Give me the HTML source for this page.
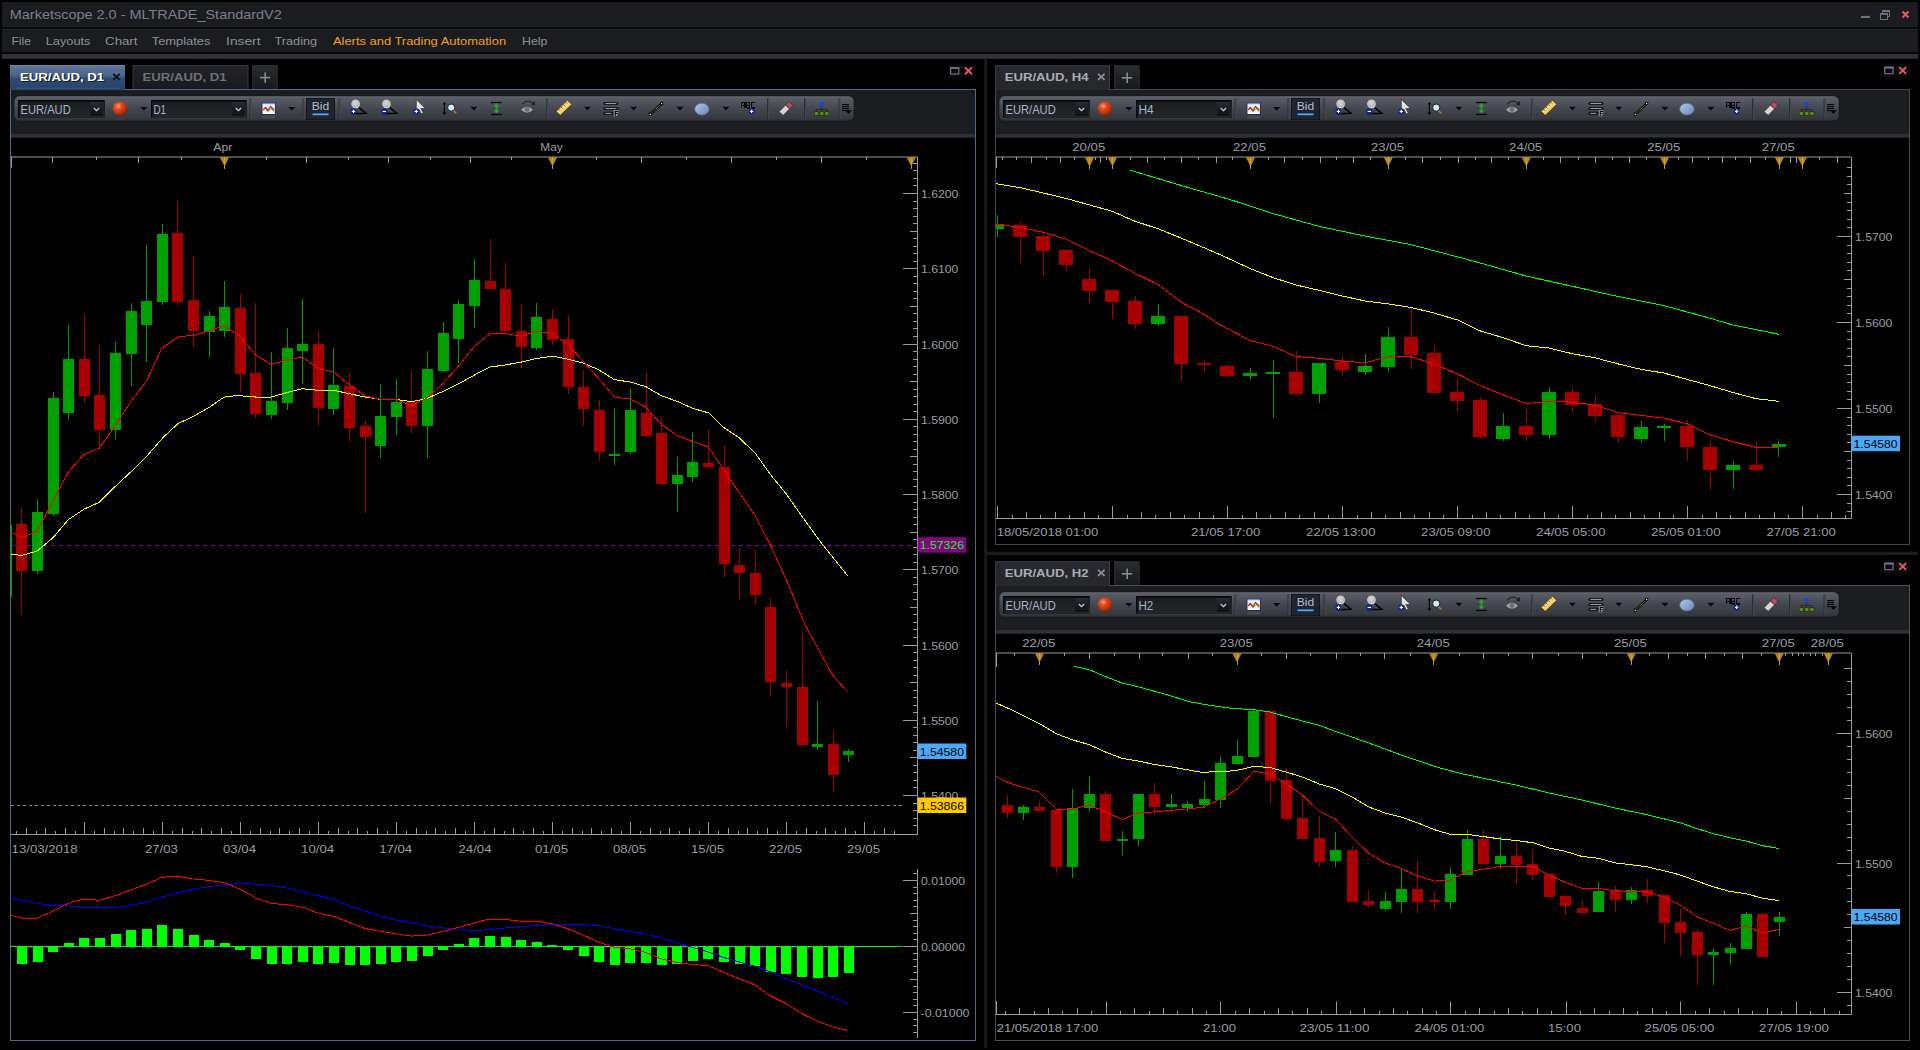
<!DOCTYPE html><html><head><meta charset="utf-8"><style>html,body{margin:0;padding:0;background:#000;width:1920px;height:1050px;overflow:hidden}svg{display:block}</style></head><body>
<svg width="1920" height="1050" viewBox="0 0 1920 1050" font-family='"Liberation Sans", sans-serif'>
<defs>
<linearGradient id="pill" x1="0" y1="0" x2="0" y2="1"><stop offset="0" stop-color="#5a5d66"/><stop offset="0.15" stop-color="#565962"/><stop offset="0.55" stop-color="#42454d"/><stop offset="0.92" stop-color="#35383f"/><stop offset="1" stop-color="#2a2c31"/></linearGradient>
<linearGradient id="tabA" x1="0" y1="0" x2="0" y2="1"><stop offset="0" stop-color="#62789a"/><stop offset="0.45" stop-color="#4a6488"/><stop offset="0.55" stop-color="#2e4c74"/><stop offset="1" stop-color="#27436a"/></linearGradient>
<linearGradient id="plus" x1="0" y1="0" x2="0" y2="1"><stop offset="0" stop-color="#2b2c31"/><stop offset="1" stop-color="#17181b"/></linearGradient>
<radialGradient id="ball" cx="0.38" cy="0.33" r="0.7"><stop offset="0" stop-color="#f8b0a0"/><stop offset="0.3" stop-color="#e8501c"/><stop offset="0.75" stop-color="#c03008"/><stop offset="1" stop-color="#802008"/></radialGradient>
<linearGradient id="ell" x1="0" y1="0" x2="1" y2="1"><stop offset="0" stop-color="#b0c8e8"/><stop offset="1" stop-color="#6a88b8"/></linearGradient>
<linearGradient id="combo" x1="0" y1="0" x2="0" y2="1"><stop offset="0" stop-color="#1b1c20"/><stop offset="1" stop-color="#26272c"/></linearGradient>
<linearGradient id="ddb" x1="0" y1="0" x2="0" y2="1"><stop offset="0" stop-color="#2a2b30"/><stop offset="1" stop-color="#0f1013"/></linearGradient>
<radialGradient id="mag" cx="0.45" cy="0.4" r="0.6"><stop offset="0" stop-color="#d8d8d8"/><stop offset="0.8" stop-color="#b8b8b8"/><stop offset="1" stop-color="#f0f0f8"/></radialGradient>
<linearGradient id="rul" x1="0" y1="0" x2="1" y2="1"><stop offset="0" stop-color="#fff4c0"/><stop offset="1" stop-color="#e8b028"/></linearGradient>
<linearGradient id="tabI" x1="0" y1="0" x2="0" y2="1"><stop offset="0" stop-color="#232429"/><stop offset="1" stop-color="#18191d"/></linearGradient>
<clipPath id="cL"><rect x="10.5" y="157" width="907" height="677"/></clipPath>
<clipPath id="cLm"><rect x="10.5" y="860" width="907" height="180"/></clipPath>
<clipPath id="cT"><rect x="996" y="157" width="855" height="361"/></clipPath>
<clipPath id="cB"><rect x="996" y="653" width="855" height="361"/></clipPath>
</defs>
<rect x="2.00" y="2.00" width="1916.00" height="25.60" fill="#1b1c20"/>
<rect x="2.00" y="27.60" width="1916.00" height="1.20" fill="#050507"/>
<rect x="2.00" y="28.80" width="1916.00" height="1.40" fill="#27282d"/>
<rect x="2.00" y="30.20" width="1916.00" height="22.40" fill="#1b1c20"/>
<rect x="2.00" y="52.60" width="1916.00" height="1.30" fill="#050507"/>
<rect x="2.00" y="53.90" width="1916.00" height="4.90" fill="#30323a"/>
<text x="9.80" y="19.30" font-size="13" fill="#7c7e8e" textLength="272.00" lengthAdjust="spacingAndGlyphs">Marketscope 2.0 - MLTRADE_StandardV2</text>
<text x="11.40" y="45.20" font-size="11" fill="#8c9098" textLength="19.70" lengthAdjust="spacingAndGlyphs">File</text>
<text x="45.75" y="45.20" font-size="11" fill="#8c9098" textLength="44.75" lengthAdjust="spacingAndGlyphs">Layouts</text>
<text x="105.10" y="45.20" font-size="11" fill="#8c9098" textLength="32.30" lengthAdjust="spacingAndGlyphs">Chart</text>
<text x="151.70" y="45.20" font-size="11" fill="#8c9098" textLength="58.80" lengthAdjust="spacingAndGlyphs">Templates</text>
<text x="226.10" y="45.20" font-size="11" fill="#8c9098" textLength="34.40" lengthAdjust="spacingAndGlyphs">Insert</text>
<text x="274.50" y="45.20" font-size="11" fill="#8c9098" textLength="42.60" lengthAdjust="spacingAndGlyphs">Trading</text>
<text x="332.90" y="45.20" font-size="11" fill="#f0a020" textLength="173.20" lengthAdjust="spacingAndGlyphs">Alerts and Trading Automation</text>
<text x="522.00" y="45.20" font-size="11" fill="#8c9098" textLength="25.40" lengthAdjust="spacingAndGlyphs">Help</text>
<rect x="1860.90" y="15.90" width="9.10" height="2.10" fill="#6e7080"/>
<g fill="none" stroke="#6e7080" stroke-width="1.1" shape-rendering="crispEdges"><path d="M1882.6 13 V10.5 H1889.5 V16.5 H1887.6"/><rect x="1880.5" y="13.5" width="7" height="6"/></g>
<rect x="1882.10" y="10.00" width="7.80" height="2.00" fill="#6e7080"/>
<rect x="1880.00" y="12.90" width="8.10" height="2.00" fill="#6e7080"/>
<path d="M1902.6 11.5 L1908.5 17.5 M1908.5 11.5 L1902.6 17.5" stroke="#e05a60" stroke-width="2"/>
<rect x="10" y="65" width="115" height="24.6" fill="url(#tabA)"/>
<rect x="10.00" y="65.00" width="115.00" height="1.00" fill="#7088a8"/>
<rect x="16.00" y="87.80" width="104.00" height="1.00" fill="#3a5880"/>
<text x="20.00" y="81.00" font-size="11" font-weight="bold" fill="#101010" textLength="84.00" lengthAdjust="spacingAndGlyphs" transform="translate(1,1)">EUR/AUD, D1</text>
<text x="20.00" y="81.00" font-size="11" font-weight="bold" fill="#ffffff" textLength="84.00" lengthAdjust="spacingAndGlyphs">EUR/AUD, D1</text>
<path d="M113.2 73.8 L119.8 79.8 M119.8 73.8 L113.2 79.8" stroke="#101010" stroke-width="1.8"/>
<rect x="133" y="65.5" width="115" height="24" fill="url(#tabI)" stroke="#34363c" stroke-width="1"/>
<text x="142.50" y="81.00" font-size="11" font-weight="bold" fill="#6c7078" textLength="84.00" lengthAdjust="spacingAndGlyphs">EUR/AUD, D1</text>
<rect x="252.7" y="65.5" width="24.5" height="24" fill="url(#plus)" stroke="#2c2d33" stroke-width="1"/>
<rect x="260.00" y="76.80" width="10.20" height="1.60" fill="#8a8c94"/>
<rect x="264.40" y="72.40" width="1.60" height="10.40" fill="#8a8c94"/>
<rect x="948.10" y="64.40" width="27.70" height="13.50" fill="#0b0b0d"/>
<rect x="950.6" y="67.6" width="8.2" height="6.4" fill="none" stroke="#6e7080" stroke-width="1.2"/>
<rect x="950.10" y="67.00" width="9.20" height="2.00" fill="#6e7080"/>
<path d="M965.1 67.4 L971.9 74.2 M971.9 67.4 L965.1 74.2" stroke="#e05a5a" stroke-width="2"/>
<rect x="10.5" y="89.5" width="965" height="951" fill="#000" stroke="#51688a" stroke-width="1"/>
<rect x="11.00" y="90.00" width="964.00" height="44.00" fill="#1c1d21"/>
<rect x="11.00" y="134.00" width="964.00" height="3.70" fill="#2e3038"/>
<rect x="11.00" y="89.00" width="114.00" height="1.20" fill="#27436a"/>
<rect x="13.4" y="95.3" width="841.3" height="26.5" rx="6" ry="6" fill="#18191d"/>
<rect x="14.4" y="96.3" width="839.3" height="24.5" rx="5" ry="5" fill="url(#pill)"/>
<rect x="19.00" y="96.60" width="830.00" height="1.00" fill="#62656e"/>
<rect x="18.00" y="100.00" width="86.80" height="17.70" fill="#08090b"/>
<rect x="19.50" y="101.80" width="85.30" height="15.90" fill="url(#combo)"/>
<rect x="90.0" y="102.0" width="12.8" height="13.8" fill="url(#ddb)"/>
<path d="M93.8 108.0 L96.5 110.7 L99.2 108.0" fill="none" stroke="#d0d4dc" stroke-width="1.1"/>
<text x="20.50" y="114.00" font-size="12" fill="#a6b4ca" textLength="50.20" lengthAdjust="spacingAndGlyphs">EUR/AUD</text>
<rect x="151.00" y="100.00" width="95.70" height="17.70" fill="#08090b"/>
<rect x="152.50" y="101.80" width="94.20" height="15.90" fill="url(#combo)"/>
<rect x="231.9" y="102.0" width="12.8" height="13.8" fill="url(#ddb)"/>
<path d="M235.7 108.0 L238.4 110.7 L241.1 108.0" fill="none" stroke="#d0d4dc" stroke-width="1.1"/>
<text x="153.50" y="114.00" font-size="12" fill="#a6b4ca" textLength="12.60" lengthAdjust="spacingAndGlyphs">D1</text>
<circle cx="119.9" cy="108.5" r="7.1" fill="url(#ball)"/>
<ellipse cx="119.9" cy="118.5" rx="5" ry="1.5" fill="#5a3a38" opacity="0.5"/>
<path d="M140.4 107.0 L147.4 107.0 L143.9 110.7 Z" fill="#0a0a0a"/>
<rect x="249.50" y="98.20" width="1.00" height="21.30" fill="#2a2c31"/>
<rect x="250.50" y="98.20" width="1.00" height="21.30" fill="#464950"/>
<rect x="261.70" y="102.00" width="14.00" height="12.70" fill="#1a2a60"/>
<rect x="262.50" y="103.80" width="12.40" height="10.20" fill="#f4f6fa"/>
<rect x="262.50" y="102.60" width="12.40" height="1.60" fill="#6a8ad0"/>
<polyline points="263.0,110.0 265.5,107.5 268.0,110.5 270.5,106.5 274.3,110.0" fill="none" stroke="#d82020" stroke-width="1.3"/>
<polyline points="265.5,108.5 268.0,111.5 271.0,108.5 274.3,111.5" fill="none" stroke="#209020" stroke-width="1"/>
<rect x="262.50" y="115.80" width="12.50" height="2.60" fill="#4a4d55"/>
<path d="M288.2 107.0 L295.2 107.0 L291.7 110.7 Z" fill="#0a0a0a"/>
<rect x="302.50" y="98.20" width="1.00" height="21.30" fill="#2a2c31"/>
<rect x="303.50" y="98.20" width="1.00" height="21.30" fill="#464950"/>
<rect x="306.00" y="98.00" width="29.00" height="22.00" fill="#15171b"/>
<rect x="307.00" y="99.00" width="27.00" height="20.00" fill="#1e2530"/>
<text x="311.75" y="110.30" font-size="10.5" fill="#b4bcc8" textLength="17.50" lengthAdjust="spacingAndGlyphs" font-weight="normal">Bid</text>
<rect x="312.50" y="113.40" width="16.00" height="1.80" fill="#4aa8f0"/>
<rect x="338.50" y="98.20" width="1.00" height="21.30" fill="#2a2c31"/>
<rect x="339.50" y="98.20" width="1.00" height="21.30" fill="#464950"/>
<path d="M359.0 107.6 L365.8 113.2 L351.4 113.6" fill="none" stroke="#050505" stroke-width="1.6"/>
<circle cx="355.6" cy="103.8" r="4.4" fill="url(#mag)"/>
<circle cx="353.5" cy="111.4" r="3.1" fill="#0c2a88"/>
<rect x="351.80" y="110.90" width="3.40" height="1.10" fill="#ffffff"/>
<rect x="352.95" y="109.70" width="1.10" height="3.40" fill="#ffffff"/>
<path d="M389.8 107.6 L396.6 113.2 L382.2 113.6" fill="none" stroke="#050505" stroke-width="1.6"/>
<circle cx="386.4" cy="103.8" r="4.4" fill="url(#mag)"/>
<circle cx="384.3" cy="111.4" r="3.1" fill="#0c2a88"/>
<rect x="382.60" y="110.90" width="3.40" height="1.10" fill="#ffffff"/>
<path d="M416.3 99.4 L416.3 111.0 L418.8 109.3 L421.5 114.0 L423.3 113.0 L420.8 108.5 L425.4 108.5 Z" fill="#e4e4e4" stroke="#303030" stroke-width="0.7"/>
<circle cx="416.3" cy="111.4" r="3.1" fill="#0c2a88"/>
<rect x="414.60" y="110.90" width="3.40" height="1.10" fill="#ffffff"/>
<rect x="415.75" y="109.70" width="1.10" height="3.40" fill="#ffffff"/>
<path d="M444.4 102.5 V114.5" stroke="#080808" stroke-width="1.2"/>
<path d="M442.4 104.6 L444.4 102.0 L446.4 104.6 Z M442.4 112.4 L444.4 115.0 L446.4 112.4 Z" fill="#080808"/>
<path d="M453.3 110.4 L456.2 113.4" stroke="#d07010" stroke-width="1.6"/>
<circle cx="451.2" cy="107.6" r="3.6" fill="#c8ecfa" stroke="#101010" stroke-width="0.9"/>
<path d="M470.4 106.8 L477.4 106.8 L473.9 110.5 Z" fill="#0a0a0a"/>
<rect x="491.00" y="101.90" width="10.80" height="1.30" fill="#080808"/>
<rect x="491.00" y="113.80" width="10.80" height="1.30" fill="#080808"/>
<path d="M496.4 103.0 L493.6 106.4 L499.2 106.4 Z M496.4 113.6 L493.6 110.2 L499.2 110.2 Z" fill="#28a828"/>
<rect x="495.60" y="105.50" width="1.70" height="5.50" fill="#28a828"/>
<path d="M520.6 109.8 Q527.0 103.2 533.4 109.8 Q527.0 116.2 520.6 109.8 Z" fill="#a4a6aa" stroke="#3a3c40" stroke-width="0.6"/>
<circle cx="527.0" cy="109.6" r="2.4" fill="#6e7074"/>
<path d="M522.2 104.2 Q527.5 98.5 532.6 103.0" fill="none" stroke="#1e2024" stroke-width="1.1"/>
<path d="M531.0 104.5 L535.0 101.0 L535.0 105.5 Z" fill="#1e2024"/>
<rect x="546.30" y="98.20" width="1.00" height="21.30" fill="#2a2c31"/>
<rect x="547.30" y="98.20" width="1.00" height="21.30" fill="#464950"/>
<path d="M556.1 111.4 L567.3 100.2 L571.8 104.3 L560.3 115.3 Z" fill="url(#rul)" stroke="#5a4000" stroke-width="0.8"/>
<path d="M558.6 109.2 l1.3 1.3" stroke="#303010" stroke-width="0.8"/>
<path d="M561.0 106.9 l1.3 1.3" stroke="#303010" stroke-width="0.8"/>
<path d="M563.4 104.5 l1.3 1.3" stroke="#303010" stroke-width="0.8"/>
<path d="M565.8 102.2 l1.3 1.3" stroke="#303010" stroke-width="0.8"/>
<path d="M583.9 106.7 L590.9 106.7 L587.4 110.4 Z" fill="#0a0a0a"/>
<rect x="603.3" y="101.9" width="15.3" height="3.2" rx="1.5" fill="#1a1b1e"/>
<rect x="605.50" y="103.00" width="10.90" height="1.00" fill="#9a9ca2"/>
<rect x="603.3" y="106.9" width="15.3" height="3.2" rx="1.5" fill="#1a1b1e"/>
<rect x="605.50" y="108.00" width="10.90" height="1.00" fill="#9a9ca2"/>
<rect x="603.3" y="111.8" width="10.1" height="3.2" rx="1.5" fill="#1a1b1e"/>
<rect x="605.50" y="112.90" width="5.70" height="1.00" fill="#9a9ca2"/>
<path d="M615.2 116.3 V111.5 H618.3 M615.2 113.6 H617.5" fill="none" stroke="#d8d8d8" stroke-width="2.6"/>
<path d="M615.2 116.3 V111.5 H618.3 M615.2 113.6 H617.5" fill="none" stroke="#080808" stroke-width="1.3"/>
<path d="M630.2 106.8 L637.2 106.8 L633.7 110.5 Z" fill="#0a0a0a"/>
<path d="M650.3 114.4 L661.6 103.5" stroke="#080808" stroke-width="2.6"/>
<path d="M650.3 114.4 L661.6 103.5" stroke="#7ac020" stroke-width="1" stroke-dasharray="1,0.6"/>
<rect x="648.70" y="112.80" width="3.20" height="3.20" fill="#080808"/>
<rect x="649.70" y="113.80" width="1.20" height="1.20" fill="#e0e0e0"/>
<rect x="660.00" y="101.90" width="3.20" height="3.20" fill="#080808"/>
<rect x="661.00" y="102.90" width="1.20" height="1.20" fill="#e0e0e0"/>
<path d="M676.5 106.8 L683.5 106.8 L680.0 110.5 Z" fill="#0a0a0a"/>
<ellipse cx="701.9" cy="109.1" rx="7.2" ry="5.9" fill="url(#ell)" stroke="#56729e" stroke-width="0.8"/>
<path d="M722.4 106.8 L729.4 106.8 L725.9 110.5 Z" fill="#0a0a0a"/>
<g fill="none" stroke="#080808" stroke-width="1.3" shape-rendering="crispEdges"><path d="M741.6 108.0 V102.5 H745.0 V108.0 M741.6 105.2 H745.0"/><path d="M746.6 108.0 V102.5 H749.5 V108.0 H746.6 M746.6 105.2 H749.5"/><path d="M755.2 102.5 H751.4 V108.0 H755.2"/></g>
<circle cx="751.6" cy="111.3" r="3.1" fill="#0c2a88"/>
<rect x="749.90" y="110.80" width="3.40" height="1.10" fill="#ffffff"/>
<rect x="751.05" y="109.60" width="1.10" height="3.40" fill="#ffffff"/>
<rect x="767.10" y="98.20" width="1.00" height="21.30" fill="#2a2c31"/>
<rect x="768.10" y="98.20" width="1.00" height="21.30" fill="#464950"/>
<path d="M779.0 111.7 L785.6 105.0 L789.6 108.8 L783.2 115.3 Z" fill="#d4d4d4" stroke="#303030" stroke-width="0.7"/>
<path d="M785.6 105.0 L788.8 101.6 L793.3 105.6 L789.6 108.8 Z" fill="#c04858" stroke="#402020" stroke-width="0.7"/>
<rect x="804.10" y="98.20" width="1.00" height="21.30" fill="#2a2c31"/>
<rect x="805.10" y="98.20" width="1.00" height="21.30" fill="#464950"/>
<path d="M821.4 106.5 V111.5 M816.5 112.0 V109.5 H826.9 V112.0" stroke="#243410" stroke-width="1.1" fill="none"/>
<rect x="819.10" y="102.00" width="4.70" height="4.80" fill="#1848d8"/>
<rect x="814.20" y="111.40" width="4.50" height="4.30" fill="#243410"/>
<rect x="814.80" y="112.00" width="3.30" height="3.10" fill="#5a8a18"/>
<rect x="819.60" y="111.40" width="4.50" height="4.30" fill="#243410"/>
<rect x="820.20" y="112.00" width="3.30" height="3.10" fill="#5a8a18"/>
<rect x="824.60" y="111.40" width="4.50" height="4.30" fill="#243410"/>
<rect x="825.20" y="112.00" width="3.30" height="3.10" fill="#5a8a18"/>
<rect x="838.60" y="98.20" width="1.00" height="21.30" fill="#2a2c31"/>
<rect x="839.60" y="98.20" width="1.00" height="21.30" fill="#464950"/>
<rect x="842.00" y="104.00" width="7.00" height="1.10" fill="#080808"/>
<rect x="842.00" y="106.00" width="7.00" height="1.10" fill="#080808"/>
<rect x="842.00" y="108.00" width="7.00" height="1.10" fill="#080808"/>
<rect x="842.00" y="110.00" width="7.00" height="1.10" fill="#080808"/>
<path d="M845.0 110.2 L852.0 110.2 L848.5 113.9 Z" fill="#0a0a0a"/>
<rect x="11.00" y="156.50" width="906.50" height="1.00" fill="#9a9a9a"/>
<rect x="11.00" y="156.50" width="1.00" height="11.00" fill="#9a9a9a"/>
<rect x="52.00" y="157.00" width="1.00" height="6.00" fill="#9a9a9a"/>
<rect x="96.00" y="157.00" width="1.00" height="3.00" fill="#9a9a9a"/>
<rect x="138.00" y="157.00" width="1.00" height="6.00" fill="#9a9a9a"/>
<rect x="181.00" y="157.00" width="1.00" height="3.00" fill="#9a9a9a"/>
<rect x="266.00" y="157.00" width="1.00" height="3.00" fill="#9a9a9a"/>
<rect x="306.00" y="157.00" width="1.00" height="6.00" fill="#9a9a9a"/>
<rect x="348.00" y="157.00" width="1.00" height="3.00" fill="#9a9a9a"/>
<rect x="388.00" y="157.00" width="1.00" height="6.00" fill="#9a9a9a"/>
<rect x="430.00" y="157.00" width="1.00" height="3.00" fill="#9a9a9a"/>
<rect x="470.00" y="157.00" width="1.00" height="6.00" fill="#9a9a9a"/>
<rect x="511.00" y="157.00" width="1.00" height="3.00" fill="#9a9a9a"/>
<rect x="596.00" y="157.00" width="1.00" height="3.00" fill="#9a9a9a"/>
<rect x="641.00" y="157.00" width="1.00" height="6.00" fill="#9a9a9a"/>
<rect x="686.00" y="157.00" width="1.00" height="3.00" fill="#9a9a9a"/>
<rect x="731.00" y="157.00" width="1.00" height="6.00" fill="#9a9a9a"/>
<rect x="776.00" y="157.00" width="1.00" height="3.00" fill="#9a9a9a"/>
<rect x="821.00" y="157.00" width="1.00" height="6.00" fill="#9a9a9a"/>
<rect x="866.00" y="157.00" width="1.00" height="3.00" fill="#9a9a9a"/>
<text x="213.26" y="151.00" font-size="11" fill="#9a9ea6" textLength="19.07" lengthAdjust="spacingAndGlyphs">Apr</text>
<text x="540.30" y="151.00" font-size="11" fill="#9a9ea6" textLength="22.40" lengthAdjust="spacingAndGlyphs">May</text>
<rect x="11.00" y="834.00" width="907.00" height="1.00" fill="#9a9a9a"/>
<rect x="16.00" y="831.00" width="1.00" height="3.00" fill="#9a9a9a"/>
<rect x="26.00" y="828.00" width="1.00" height="6.00" fill="#9a9a9a"/>
<rect x="36.00" y="831.00" width="1.00" height="3.00" fill="#9a9a9a"/>
<rect x="45.00" y="828.00" width="1.00" height="6.00" fill="#9a9a9a"/>
<rect x="55.00" y="831.00" width="1.00" height="3.00" fill="#9a9a9a"/>
<rect x="65.00" y="828.00" width="1.00" height="6.00" fill="#9a9a9a"/>
<rect x="75.00" y="831.00" width="1.00" height="3.00" fill="#9a9a9a"/>
<rect x="84.00" y="822.00" width="1.00" height="12.00" fill="#9a9a9a"/>
<rect x="94.00" y="831.00" width="1.00" height="3.00" fill="#9a9a9a"/>
<rect x="104.00" y="828.00" width="1.00" height="6.00" fill="#9a9a9a"/>
<rect x="114.00" y="831.00" width="1.00" height="3.00" fill="#9a9a9a"/>
<rect x="123.00" y="828.00" width="1.00" height="6.00" fill="#9a9a9a"/>
<rect x="133.00" y="831.00" width="1.00" height="3.00" fill="#9a9a9a"/>
<rect x="143.00" y="828.00" width="1.00" height="6.00" fill="#9a9a9a"/>
<rect x="153.00" y="831.00" width="1.00" height="3.00" fill="#9a9a9a"/>
<rect x="162.00" y="822.00" width="1.00" height="12.00" fill="#9a9a9a"/>
<rect x="172.00" y="831.00" width="1.00" height="3.00" fill="#9a9a9a"/>
<rect x="182.00" y="828.00" width="1.00" height="6.00" fill="#9a9a9a"/>
<rect x="192.00" y="831.00" width="1.00" height="3.00" fill="#9a9a9a"/>
<rect x="201.00" y="828.00" width="1.00" height="6.00" fill="#9a9a9a"/>
<rect x="211.00" y="831.00" width="1.00" height="3.00" fill="#9a9a9a"/>
<rect x="221.00" y="828.00" width="1.00" height="6.00" fill="#9a9a9a"/>
<rect x="231.00" y="831.00" width="1.00" height="3.00" fill="#9a9a9a"/>
<rect x="240.00" y="822.00" width="1.00" height="12.00" fill="#9a9a9a"/>
<rect x="250.00" y="831.00" width="1.00" height="3.00" fill="#9a9a9a"/>
<rect x="260.00" y="828.00" width="1.00" height="6.00" fill="#9a9a9a"/>
<rect x="270.00" y="831.00" width="1.00" height="3.00" fill="#9a9a9a"/>
<rect x="279.00" y="828.00" width="1.00" height="6.00" fill="#9a9a9a"/>
<rect x="289.00" y="831.00" width="1.00" height="3.00" fill="#9a9a9a"/>
<rect x="299.00" y="828.00" width="1.00" height="6.00" fill="#9a9a9a"/>
<rect x="309.00" y="831.00" width="1.00" height="3.00" fill="#9a9a9a"/>
<rect x="318.00" y="822.00" width="1.00" height="12.00" fill="#9a9a9a"/>
<rect x="328.00" y="831.00" width="1.00" height="3.00" fill="#9a9a9a"/>
<rect x="338.00" y="828.00" width="1.00" height="6.00" fill="#9a9a9a"/>
<rect x="348.00" y="831.00" width="1.00" height="3.00" fill="#9a9a9a"/>
<rect x="357.00" y="828.00" width="1.00" height="6.00" fill="#9a9a9a"/>
<rect x="367.00" y="831.00" width="1.00" height="3.00" fill="#9a9a9a"/>
<rect x="377.00" y="828.00" width="1.00" height="6.00" fill="#9a9a9a"/>
<rect x="387.00" y="831.00" width="1.00" height="3.00" fill="#9a9a9a"/>
<rect x="396.00" y="822.00" width="1.00" height="12.00" fill="#9a9a9a"/>
<rect x="406.00" y="831.00" width="1.00" height="3.00" fill="#9a9a9a"/>
<rect x="416.00" y="828.00" width="1.00" height="6.00" fill="#9a9a9a"/>
<rect x="426.00" y="831.00" width="1.00" height="3.00" fill="#9a9a9a"/>
<rect x="435.00" y="828.00" width="1.00" height="6.00" fill="#9a9a9a"/>
<rect x="445.00" y="831.00" width="1.00" height="3.00" fill="#9a9a9a"/>
<rect x="455.00" y="828.00" width="1.00" height="6.00" fill="#9a9a9a"/>
<rect x="465.00" y="831.00" width="1.00" height="3.00" fill="#9a9a9a"/>
<rect x="474.00" y="822.00" width="1.00" height="12.00" fill="#9a9a9a"/>
<rect x="484.00" y="831.00" width="1.00" height="3.00" fill="#9a9a9a"/>
<rect x="494.00" y="828.00" width="1.00" height="6.00" fill="#9a9a9a"/>
<rect x="504.00" y="831.00" width="1.00" height="3.00" fill="#9a9a9a"/>
<rect x="513.00" y="828.00" width="1.00" height="6.00" fill="#9a9a9a"/>
<rect x="523.00" y="831.00" width="1.00" height="3.00" fill="#9a9a9a"/>
<rect x="533.00" y="828.00" width="1.00" height="6.00" fill="#9a9a9a"/>
<rect x="543.00" y="831.00" width="1.00" height="3.00" fill="#9a9a9a"/>
<rect x="552.00" y="822.00" width="1.00" height="12.00" fill="#9a9a9a"/>
<rect x="562.00" y="831.00" width="1.00" height="3.00" fill="#9a9a9a"/>
<rect x="572.00" y="828.00" width="1.00" height="6.00" fill="#9a9a9a"/>
<rect x="582.00" y="831.00" width="1.00" height="3.00" fill="#9a9a9a"/>
<rect x="591.00" y="828.00" width="1.00" height="6.00" fill="#9a9a9a"/>
<rect x="601.00" y="831.00" width="1.00" height="3.00" fill="#9a9a9a"/>
<rect x="611.00" y="828.00" width="1.00" height="6.00" fill="#9a9a9a"/>
<rect x="621.00" y="831.00" width="1.00" height="3.00" fill="#9a9a9a"/>
<rect x="630.00" y="822.00" width="1.00" height="12.00" fill="#9a9a9a"/>
<rect x="640.00" y="831.00" width="1.00" height="3.00" fill="#9a9a9a"/>
<rect x="650.00" y="828.00" width="1.00" height="6.00" fill="#9a9a9a"/>
<rect x="660.00" y="831.00" width="1.00" height="3.00" fill="#9a9a9a"/>
<rect x="669.00" y="828.00" width="1.00" height="6.00" fill="#9a9a9a"/>
<rect x="679.00" y="831.00" width="1.00" height="3.00" fill="#9a9a9a"/>
<rect x="689.00" y="828.00" width="1.00" height="6.00" fill="#9a9a9a"/>
<rect x="699.00" y="831.00" width="1.00" height="3.00" fill="#9a9a9a"/>
<rect x="708.00" y="822.00" width="1.00" height="12.00" fill="#9a9a9a"/>
<rect x="718.00" y="831.00" width="1.00" height="3.00" fill="#9a9a9a"/>
<rect x="728.00" y="828.00" width="1.00" height="6.00" fill="#9a9a9a"/>
<rect x="738.00" y="831.00" width="1.00" height="3.00" fill="#9a9a9a"/>
<rect x="747.00" y="828.00" width="1.00" height="6.00" fill="#9a9a9a"/>
<rect x="757.00" y="831.00" width="1.00" height="3.00" fill="#9a9a9a"/>
<rect x="767.00" y="828.00" width="1.00" height="6.00" fill="#9a9a9a"/>
<rect x="777.00" y="831.00" width="1.00" height="3.00" fill="#9a9a9a"/>
<rect x="786.00" y="822.00" width="1.00" height="12.00" fill="#9a9a9a"/>
<rect x="796.00" y="831.00" width="1.00" height="3.00" fill="#9a9a9a"/>
<rect x="806.00" y="828.00" width="1.00" height="6.00" fill="#9a9a9a"/>
<rect x="816.00" y="831.00" width="1.00" height="3.00" fill="#9a9a9a"/>
<rect x="825.00" y="828.00" width="1.00" height="6.00" fill="#9a9a9a"/>
<rect x="835.00" y="831.00" width="1.00" height="3.00" fill="#9a9a9a"/>
<rect x="845.00" y="828.00" width="1.00" height="6.00" fill="#9a9a9a"/>
<rect x="855.00" y="831.00" width="1.00" height="3.00" fill="#9a9a9a"/>
<rect x="864.00" y="822.00" width="1.00" height="12.00" fill="#9a9a9a"/>
<rect x="874.00" y="831.00" width="1.00" height="3.00" fill="#9a9a9a"/>
<rect x="884.00" y="828.00" width="1.00" height="6.00" fill="#9a9a9a"/>
<rect x="894.00" y="831.00" width="1.00" height="3.00" fill="#9a9a9a"/>
<text x="11.60" y="852.50" font-size="11" fill="#9a9ea6" textLength="65.96" lengthAdjust="spacingAndGlyphs">13/03/2018</text>
<text x="144.91" y="852.50" font-size="11" fill="#9a9ea6" textLength="32.98" lengthAdjust="spacingAndGlyphs">27/03</text>
<text x="223.01" y="852.50" font-size="11" fill="#9a9ea6" textLength="32.98" lengthAdjust="spacingAndGlyphs">03/04</text>
<text x="301.11" y="852.50" font-size="11" fill="#9a9ea6" textLength="32.98" lengthAdjust="spacingAndGlyphs">10/04</text>
<text x="379.21" y="852.50" font-size="11" fill="#9a9ea6" textLength="32.98" lengthAdjust="spacingAndGlyphs">17/04</text>
<text x="458.51" y="852.50" font-size="11" fill="#9a9ea6" textLength="32.98" lengthAdjust="spacingAndGlyphs">24/04</text>
<text x="535.01" y="852.50" font-size="11" fill="#9a9ea6" textLength="32.98" lengthAdjust="spacingAndGlyphs">01/05</text>
<text x="613.01" y="852.50" font-size="11" fill="#9a9ea6" textLength="32.98" lengthAdjust="spacingAndGlyphs">08/05</text>
<text x="691.01" y="852.50" font-size="11" fill="#9a9ea6" textLength="32.98" lengthAdjust="spacingAndGlyphs">15/05</text>
<text x="769.01" y="852.50" font-size="11" fill="#9a9ea6" textLength="32.98" lengthAdjust="spacingAndGlyphs">22/05</text>
<text x="847.01" y="852.50" font-size="11" fill="#9a9ea6" textLength="32.98" lengthAdjust="spacingAndGlyphs">29/05</text>
<g shape-rendering="crispEdges">
<rect x="917.00" y="157.00" width="1.00" height="677.00" fill="#9a9a9a"/>
<rect x="913.00" y="825.00" width="4.00" height="1.00" fill="#9a9a9a"/>
<rect x="913.00" y="818.00" width="4.00" height="1.00" fill="#9a9a9a"/>
<rect x="913.00" y="810.00" width="4.00" height="1.00" fill="#9a9a9a"/>
<rect x="913.00" y="803.00" width="4.00" height="1.00" fill="#9a9a9a"/>
<rect x="903.00" y="795.00" width="14.00" height="1.00" fill="#9a9a9a"/>
<rect x="913.00" y="787.00" width="4.00" height="1.00" fill="#9a9a9a"/>
<rect x="913.00" y="780.00" width="4.00" height="1.00" fill="#9a9a9a"/>
<rect x="913.00" y="772.00" width="4.00" height="1.00" fill="#9a9a9a"/>
<rect x="913.00" y="765.00" width="4.00" height="1.00" fill="#9a9a9a"/>
<rect x="910.00" y="757.00" width="7.00" height="1.00" fill="#9a9a9a"/>
<rect x="913.00" y="750.00" width="4.00" height="1.00" fill="#9a9a9a"/>
<rect x="913.00" y="742.00" width="4.00" height="1.00" fill="#9a9a9a"/>
<rect x="913.00" y="735.00" width="4.00" height="1.00" fill="#9a9a9a"/>
<rect x="913.00" y="727.00" width="4.00" height="1.00" fill="#9a9a9a"/>
<rect x="903.00" y="720.00" width="14.00" height="1.00" fill="#9a9a9a"/>
<rect x="913.00" y="712.00" width="4.00" height="1.00" fill="#9a9a9a"/>
<rect x="913.00" y="705.00" width="4.00" height="1.00" fill="#9a9a9a"/>
<rect x="913.00" y="697.00" width="4.00" height="1.00" fill="#9a9a9a"/>
<rect x="913.00" y="690.00" width="4.00" height="1.00" fill="#9a9a9a"/>
<rect x="910.00" y="682.00" width="7.00" height="1.00" fill="#9a9a9a"/>
<rect x="913.00" y="675.00" width="4.00" height="1.00" fill="#9a9a9a"/>
<rect x="913.00" y="667.00" width="4.00" height="1.00" fill="#9a9a9a"/>
<rect x="913.00" y="660.00" width="4.00" height="1.00" fill="#9a9a9a"/>
<rect x="913.00" y="652.00" width="4.00" height="1.00" fill="#9a9a9a"/>
<rect x="903.00" y="645.00" width="14.00" height="1.00" fill="#9a9a9a"/>
<rect x="913.00" y="637.00" width="4.00" height="1.00" fill="#9a9a9a"/>
<rect x="913.00" y="629.00" width="4.00" height="1.00" fill="#9a9a9a"/>
<rect x="913.00" y="622.00" width="4.00" height="1.00" fill="#9a9a9a"/>
<rect x="913.00" y="614.00" width="4.00" height="1.00" fill="#9a9a9a"/>
<rect x="910.00" y="607.00" width="7.00" height="1.00" fill="#9a9a9a"/>
<rect x="913.00" y="599.00" width="4.00" height="1.00" fill="#9a9a9a"/>
<rect x="913.00" y="592.00" width="4.00" height="1.00" fill="#9a9a9a"/>
<rect x="913.00" y="584.00" width="4.00" height="1.00" fill="#9a9a9a"/>
<rect x="913.00" y="577.00" width="4.00" height="1.00" fill="#9a9a9a"/>
<rect x="903.00" y="569.00" width="14.00" height="1.00" fill="#9a9a9a"/>
<rect x="913.00" y="562.00" width="4.00" height="1.00" fill="#9a9a9a"/>
<rect x="913.00" y="554.00" width="4.00" height="1.00" fill="#9a9a9a"/>
<rect x="913.00" y="547.00" width="4.00" height="1.00" fill="#9a9a9a"/>
<rect x="913.00" y="539.00" width="4.00" height="1.00" fill="#9a9a9a"/>
<rect x="910.00" y="532.00" width="7.00" height="1.00" fill="#9a9a9a"/>
<rect x="913.00" y="524.00" width="4.00" height="1.00" fill="#9a9a9a"/>
<rect x="913.00" y="517.00" width="4.00" height="1.00" fill="#9a9a9a"/>
<rect x="913.00" y="509.00" width="4.00" height="1.00" fill="#9a9a9a"/>
<rect x="913.00" y="502.00" width="4.00" height="1.00" fill="#9a9a9a"/>
<rect x="903.00" y="494.00" width="14.00" height="1.00" fill="#9a9a9a"/>
<rect x="913.00" y="486.00" width="4.00" height="1.00" fill="#9a9a9a"/>
<rect x="913.00" y="479.00" width="4.00" height="1.00" fill="#9a9a9a"/>
<rect x="913.00" y="471.00" width="4.00" height="1.00" fill="#9a9a9a"/>
<rect x="913.00" y="464.00" width="4.00" height="1.00" fill="#9a9a9a"/>
<rect x="910.00" y="456.00" width="7.00" height="1.00" fill="#9a9a9a"/>
<rect x="913.00" y="449.00" width="4.00" height="1.00" fill="#9a9a9a"/>
<rect x="913.00" y="441.00" width="4.00" height="1.00" fill="#9a9a9a"/>
<rect x="913.00" y="434.00" width="4.00" height="1.00" fill="#9a9a9a"/>
<rect x="913.00" y="426.00" width="4.00" height="1.00" fill="#9a9a9a"/>
<rect x="903.00" y="419.00" width="14.00" height="1.00" fill="#9a9a9a"/>
<rect x="913.00" y="411.00" width="4.00" height="1.00" fill="#9a9a9a"/>
<rect x="913.00" y="404.00" width="4.00" height="1.00" fill="#9a9a9a"/>
<rect x="913.00" y="396.00" width="4.00" height="1.00" fill="#9a9a9a"/>
<rect x="913.00" y="389.00" width="4.00" height="1.00" fill="#9a9a9a"/>
<rect x="910.00" y="381.00" width="7.00" height="1.00" fill="#9a9a9a"/>
<rect x="913.00" y="374.00" width="4.00" height="1.00" fill="#9a9a9a"/>
<rect x="913.00" y="366.00" width="4.00" height="1.00" fill="#9a9a9a"/>
<rect x="913.00" y="359.00" width="4.00" height="1.00" fill="#9a9a9a"/>
<rect x="913.00" y="351.00" width="4.00" height="1.00" fill="#9a9a9a"/>
<rect x="903.00" y="344.00" width="14.00" height="1.00" fill="#9a9a9a"/>
<rect x="913.00" y="336.00" width="4.00" height="1.00" fill="#9a9a9a"/>
<rect x="913.00" y="328.00" width="4.00" height="1.00" fill="#9a9a9a"/>
<rect x="913.00" y="321.00" width="4.00" height="1.00" fill="#9a9a9a"/>
<rect x="913.00" y="313.00" width="4.00" height="1.00" fill="#9a9a9a"/>
<rect x="910.00" y="306.00" width="7.00" height="1.00" fill="#9a9a9a"/>
<rect x="913.00" y="298.00" width="4.00" height="1.00" fill="#9a9a9a"/>
<rect x="913.00" y="291.00" width="4.00" height="1.00" fill="#9a9a9a"/>
<rect x="913.00" y="283.00" width="4.00" height="1.00" fill="#9a9a9a"/>
<rect x="913.00" y="276.00" width="4.00" height="1.00" fill="#9a9a9a"/>
<rect x="903.00" y="268.00" width="14.00" height="1.00" fill="#9a9a9a"/>
<rect x="913.00" y="261.00" width="4.00" height="1.00" fill="#9a9a9a"/>
<rect x="913.00" y="253.00" width="4.00" height="1.00" fill="#9a9a9a"/>
<rect x="913.00" y="246.00" width="4.00" height="1.00" fill="#9a9a9a"/>
<rect x="913.00" y="238.00" width="4.00" height="1.00" fill="#9a9a9a"/>
<rect x="910.00" y="231.00" width="7.00" height="1.00" fill="#9a9a9a"/>
<rect x="913.00" y="223.00" width="4.00" height="1.00" fill="#9a9a9a"/>
<rect x="913.00" y="216.00" width="4.00" height="1.00" fill="#9a9a9a"/>
<rect x="913.00" y="208.00" width="4.00" height="1.00" fill="#9a9a9a"/>
<rect x="913.00" y="201.00" width="4.00" height="1.00" fill="#9a9a9a"/>
<rect x="903.00" y="193.00" width="14.00" height="1.00" fill="#9a9a9a"/>
<rect x="913.00" y="185.00" width="4.00" height="1.00" fill="#9a9a9a"/>
<rect x="913.00" y="178.00" width="4.00" height="1.00" fill="#9a9a9a"/>
<rect x="913.00" y="170.00" width="4.00" height="1.00" fill="#9a9a9a"/>
<rect x="913.00" y="163.00" width="4.00" height="1.00" fill="#9a9a9a"/>
</g>
<text x="921.00" y="198.00" font-size="11" fill="#9a9ea6" textLength="37.42" lengthAdjust="spacingAndGlyphs">1.6200</text>
<text x="921.00" y="273.00" font-size="11" fill="#9a9ea6" textLength="37.42" lengthAdjust="spacingAndGlyphs">1.6100</text>
<text x="921.00" y="349.00" font-size="11" fill="#9a9ea6" textLength="37.42" lengthAdjust="spacingAndGlyphs">1.6000</text>
<text x="921.00" y="424.00" font-size="11" fill="#9a9ea6" textLength="37.42" lengthAdjust="spacingAndGlyphs">1.5900</text>
<text x="921.00" y="499.00" font-size="11" fill="#9a9ea6" textLength="37.42" lengthAdjust="spacingAndGlyphs">1.5800</text>
<text x="921.00" y="574.00" font-size="11" fill="#9a9ea6" textLength="37.42" lengthAdjust="spacingAndGlyphs">1.5700</text>
<text x="921.00" y="650.00" font-size="11" fill="#9a9ea6" textLength="37.42" lengthAdjust="spacingAndGlyphs">1.5600</text>
<text x="921.00" y="725.00" font-size="11" fill="#9a9ea6" textLength="37.42" lengthAdjust="spacingAndGlyphs">1.5500</text>
<text x="921.00" y="800.00" font-size="11" fill="#9a9ea6" textLength="37.42" lengthAdjust="spacingAndGlyphs">1.5400</text>
<line x1="11" y1="545.5" x2="911" y2="545.5" stroke="#9000a8" stroke-width="1" stroke-dasharray="4,4" shape-rendering="crispEdges"/>
<line x1="11" y1="805.5" x2="903" y2="805.5" stroke="#8a8a8a" stroke-width="1" stroke-dasharray="3,3" shape-rendering="crispEdges"/>
<g clip-path="url(#cL)">
<rect x="11.00" y="525.00" width="1.00" height="72.00" fill="#00a000"/>
<rect x="10.50" y="527.00" width="1.20" height="40.00" fill="#00a000"/>
</g>
<g clip-path="url(#cL)" shape-rendering="crispEdges">
<rect x="21.00" y="508.00" width="1.00" height="107.00" fill="#a80000"/>
<rect x="16.00" y="524.00" width="11.00" height="47.00" fill="#a80000"/>
<rect x="37.00" y="499.00" width="1.00" height="75.00" fill="#00a000"/>
<rect x="32.00" y="512.00" width="11.00" height="59.00" fill="#00a000"/>
<rect x="53.00" y="392.00" width="1.00" height="124.00" fill="#00a000"/>
<rect x="48.00" y="398.00" width="11.00" height="116.00" fill="#00a000"/>
<rect x="68.00" y="325.00" width="1.00" height="95.00" fill="#00a000"/>
<rect x="63.00" y="359.00" width="11.00" height="54.00" fill="#00a000"/>
<rect x="84.00" y="314.00" width="1.00" height="89.00" fill="#a80000"/>
<rect x="79.00" y="359.00" width="11.00" height="37.00" fill="#a80000"/>
<rect x="99.00" y="344.00" width="1.00" height="105.00" fill="#a80000"/>
<rect x="94.00" y="395.00" width="11.00" height="35.00" fill="#a80000"/>
<rect x="115.00" y="342.00" width="1.00" height="97.00" fill="#00a000"/>
<rect x="110.00" y="353.00" width="11.00" height="77.00" fill="#00a000"/>
<rect x="131.00" y="303.00" width="1.00" height="83.00" fill="#00a000"/>
<rect x="126.00" y="311.00" width="11.00" height="43.00" fill="#00a000"/>
<rect x="146.00" y="245.00" width="1.00" height="117.00" fill="#00a000"/>
<rect x="141.00" y="301.00" width="11.00" height="24.00" fill="#00a000"/>
<rect x="162.00" y="224.00" width="1.00" height="81.00" fill="#00a000"/>
<rect x="157.00" y="234.00" width="11.00" height="68.00" fill="#00a000"/>
<rect x="177.00" y="201.00" width="1.00" height="105.00" fill="#a80000"/>
<rect x="172.00" y="233.00" width="11.00" height="69.00" fill="#a80000"/>
<rect x="193.00" y="256.00" width="1.00" height="91.00" fill="#a80000"/>
<rect x="188.00" y="300.00" width="11.00" height="31.00" fill="#a80000"/>
<rect x="209.00" y="311.00" width="1.00" height="46.00" fill="#00a000"/>
<rect x="204.00" y="316.00" width="11.00" height="16.00" fill="#00a000"/>
<rect x="224.00" y="281.00" width="1.00" height="56.00" fill="#00a000"/>
<rect x="219.00" y="307.00" width="11.00" height="24.00" fill="#00a000"/>
<rect x="240.00" y="294.00" width="1.00" height="98.00" fill="#a80000"/>
<rect x="235.00" y="308.00" width="11.00" height="66.00" fill="#a80000"/>
<rect x="255.00" y="303.00" width="1.00" height="115.00" fill="#a80000"/>
<rect x="250.00" y="373.00" width="11.00" height="41.00" fill="#a80000"/>
<rect x="271.00" y="352.00" width="1.00" height="67.00" fill="#00a000"/>
<rect x="266.00" y="401.00" width="11.00" height="14.00" fill="#00a000"/>
<rect x="287.00" y="328.00" width="1.00" height="82.00" fill="#00a000"/>
<rect x="282.00" y="348.00" width="11.00" height="55.00" fill="#00a000"/>
<rect x="302.00" y="299.00" width="1.00" height="85.00" fill="#00a000"/>
<rect x="297.00" y="344.00" width="11.00" height="7.00" fill="#00a000"/>
<rect x="318.00" y="331.00" width="1.00" height="95.00" fill="#a80000"/>
<rect x="313.00" y="344.00" width="11.00" height="64.00" fill="#a80000"/>
<rect x="333.00" y="348.00" width="1.00" height="67.00" fill="#00a000"/>
<rect x="328.00" y="385.00" width="11.00" height="24.00" fill="#00a000"/>
<rect x="349.00" y="373.00" width="1.00" height="69.00" fill="#a80000"/>
<rect x="344.00" y="386.00" width="11.00" height="42.00" fill="#a80000"/>
<rect x="365.00" y="420.00" width="1.00" height="93.00" fill="#a80000"/>
<rect x="360.00" y="426.00" width="11.00" height="11.00" fill="#a80000"/>
<rect x="380.00" y="384.00" width="1.00" height="74.00" fill="#00a000"/>
<rect x="375.00" y="416.00" width="11.00" height="30.00" fill="#00a000"/>
<rect x="396.00" y="379.00" width="1.00" height="56.00" fill="#00a000"/>
<rect x="391.00" y="402.00" width="11.00" height="15.00" fill="#00a000"/>
<rect x="411.00" y="371.00" width="1.00" height="62.00" fill="#a80000"/>
<rect x="406.00" y="402.00" width="11.00" height="24.00" fill="#a80000"/>
<rect x="427.00" y="351.00" width="1.00" height="107.00" fill="#00a000"/>
<rect x="422.00" y="369.00" width="11.00" height="57.00" fill="#00a000"/>
<rect x="443.00" y="322.00" width="1.00" height="50.00" fill="#00a000"/>
<rect x="438.00" y="333.00" width="11.00" height="38.00" fill="#00a000"/>
<rect x="458.00" y="300.00" width="1.00" height="63.00" fill="#00a000"/>
<rect x="453.00" y="304.00" width="11.00" height="35.00" fill="#00a000"/>
<rect x="474.00" y="259.00" width="1.00" height="69.00" fill="#00a000"/>
<rect x="469.00" y="280.00" width="11.00" height="26.00" fill="#00a000"/>
<rect x="490.00" y="239.00" width="1.00" height="50.00" fill="#a80000"/>
<rect x="485.00" y="281.00" width="11.00" height="8.00" fill="#a80000"/>
<rect x="505.00" y="262.00" width="1.00" height="71.00" fill="#a80000"/>
<rect x="500.00" y="289.00" width="11.00" height="42.00" fill="#a80000"/>
<rect x="521.00" y="305.00" width="1.00" height="63.00" fill="#a80000"/>
<rect x="516.00" y="331.00" width="11.00" height="16.00" fill="#a80000"/>
<rect x="536.00" y="303.00" width="1.00" height="47.00" fill="#00a000"/>
<rect x="531.00" y="317.00" width="11.00" height="31.00" fill="#00a000"/>
<rect x="552.00" y="309.00" width="1.00" height="36.00" fill="#a80000"/>
<rect x="547.00" y="319.00" width="11.00" height="21.00" fill="#a80000"/>
<rect x="568.00" y="315.00" width="1.00" height="79.00" fill="#a80000"/>
<rect x="563.00" y="339.00" width="11.00" height="48.00" fill="#a80000"/>
<rect x="583.00" y="370.00" width="1.00" height="56.00" fill="#a80000"/>
<rect x="578.00" y="387.00" width="11.00" height="22.00" fill="#a80000"/>
<rect x="599.00" y="400.00" width="1.00" height="61.00" fill="#a80000"/>
<rect x="594.00" y="410.00" width="11.00" height="42.00" fill="#a80000"/>
<rect x="614.00" y="408.00" width="1.00" height="57.00" fill="#00a000"/>
<rect x="609.00" y="454.00" width="11.00" height="2.00" fill="#00a000"/>
<rect x="630.00" y="388.00" width="1.00" height="66.00" fill="#00a000"/>
<rect x="625.00" y="410.00" width="11.00" height="42.00" fill="#00a000"/>
<rect x="646.00" y="373.00" width="1.00" height="63.00" fill="#a80000"/>
<rect x="641.00" y="413.00" width="11.00" height="23.00" fill="#a80000"/>
<rect x="661.00" y="418.00" width="1.00" height="66.00" fill="#a80000"/>
<rect x="656.00" y="433.00" width="11.00" height="51.00" fill="#a80000"/>
<rect x="677.00" y="457.00" width="1.00" height="55.00" fill="#00a000"/>
<rect x="672.00" y="475.00" width="11.00" height="9.00" fill="#00a000"/>
<rect x="692.00" y="432.00" width="1.00" height="50.00" fill="#00a000"/>
<rect x="687.00" y="462.00" width="11.00" height="15.00" fill="#00a000"/>
<rect x="708.00" y="429.00" width="1.00" height="40.00" fill="#a80000"/>
<rect x="703.00" y="463.00" width="11.00" height="4.00" fill="#a80000"/>
<rect x="724.00" y="445.00" width="1.00" height="132.00" fill="#a80000"/>
<rect x="719.00" y="467.00" width="11.00" height="97.00" fill="#a80000"/>
<rect x="739.00" y="548.00" width="1.00" height="52.00" fill="#a80000"/>
<rect x="734.00" y="565.00" width="11.00" height="8.00" fill="#a80000"/>
<rect x="755.00" y="550.00" width="1.00" height="54.00" fill="#a80000"/>
<rect x="750.00" y="573.00" width="11.00" height="22.00" fill="#a80000"/>
<rect x="770.00" y="598.00" width="1.00" height="98.00" fill="#a80000"/>
<rect x="765.00" y="607.00" width="11.00" height="75.00" fill="#a80000"/>
<rect x="786.00" y="670.00" width="1.00" height="59.00" fill="#a80000"/>
<rect x="781.00" y="683.00" width="11.00" height="4.00" fill="#a80000"/>
<rect x="802.00" y="632.00" width="1.00" height="114.00" fill="#a80000"/>
<rect x="797.00" y="687.00" width="11.00" height="58.00" fill="#a80000"/>
<rect x="817.00" y="701.00" width="1.00" height="49.00" fill="#00a000"/>
<rect x="812.00" y="744.00" width="11.00" height="3.00" fill="#00a000"/>
<rect x="833.00" y="730.00" width="1.00" height="61.00" fill="#a80000"/>
<rect x="828.00" y="744.00" width="11.00" height="31.00" fill="#a80000"/>
<rect x="848.00" y="749.00" width="1.00" height="13.00" fill="#00a000"/>
<rect x="843.00" y="751.00" width="11.00" height="4.00" fill="#00a000"/>
</g>
<g clip-path="url(#cL)">
<polyline points="11.4,554.2 21.7,555.5 37.3,551.0 53.0,537.7 68.6,519.4 84.1,509.1 99.4,502.3 115.4,486.3 131.4,471.4 147.4,455.4 163.4,437.1 178.3,423.4 193.1,416.6 209.1,407.4 224.0,397.1 236.6,395.5 255.5,397.0 271.3,397.0 286.9,392.6 302.4,388.7 318.4,390.3 333.7,390.3 349.3,393.7 365.0,397.0 380.6,399.4 396.1,399.4 411.9,401.7 427.4,398.3 443.0,391.4 458.3,384.0 474.3,375.1 489.6,367.1 505.6,364.9 521.1,362.1 536.5,358.5 552.5,356.2 567.5,359.1 583.3,363.0 598.9,369.9 614.4,379.7 630.4,382.0 645.7,386.6 661.3,395.7 677.3,401.4 692.6,408.3 708.6,412.9 723.9,427.7 739.4,438.0 755.0,452.9 770.5,474.6 786.3,494.0 802.3,516.9 820.6,542.0 847.5,575.6" fill="none" stroke="#ffff00" stroke-width="1" shape-rendering="crispEdges"/>
<polyline points="11.4,532.0 21.7,537.7 37.3,531.3 53.0,501.0 68.6,471.4 84.1,454.3 99.4,448.1 115.4,425.7 131.4,400.6 146.0,382.0 162.0,348.0 178.0,337.0 194.0,335.0 209.0,331.0 224.0,325.6 232.0,330.9 240.0,337.0 255.5,354.9 271.3,364.5 286.9,359.9 302.4,357.1 318.4,368.6 333.7,372.0 349.3,384.6 365.0,396.0 380.6,399.4 396.1,399.4 411.9,405.6 427.4,397.8 443.0,383.4 458.3,366.3 474.3,346.6 489.6,334.0 505.6,333.5 521.1,336.3 536.5,331.3 552.5,333.3 567.5,344.3 583.3,361.4 598.9,378.6 614.4,396.9 630.4,399.1 645.7,407.1 661.3,424.3 677.3,435.7 692.6,441.4 708.6,447.1 723.9,470.0 739.4,492.9 755.0,515.3 770.5,545.4 786.3,579.7 805.1,624.9 832.6,675.1 848.1,692.3" fill="none" stroke="#ff0000" stroke-width="1" shape-rendering="crispEdges"/>
</g>
<rect x="224.00" y="157.00" width="1.00" height="12.00" fill="#9a9a9a"/>
<path d="M219.9 157.2 L229.1 157.2 L225.1 165.3 L223.9 165.3 Z" fill="#b8891a"/>
<rect x="224.00" y="157.00" width="1.00" height="9.50" fill="#d0a020"/>
<rect x="552.00" y="157.00" width="1.00" height="12.00" fill="#9a9a9a"/>
<path d="M547.9 157.2 L557.1 157.2 L553.1 165.3 L551.9 165.3 Z" fill="#b8891a"/>
<rect x="552.00" y="157.00" width="1.00" height="9.50" fill="#d0a020"/>
<rect x="911.00" y="157.00" width="1.00" height="12.00" fill="#9a9a9a"/>
<path d="M906.6 157.2 L915.9 157.2 L911.9 165.3 L910.6 165.3 Z" fill="#b8891a"/>
<rect x="911.00" y="157.00" width="1.00" height="9.50" fill="#d0a020"/>
<rect x="917.80" y="537.20" width="48.50" height="15.50" fill="#880088"/>
<text x="919.80" y="549.20" font-size="11" fill="#00ff00" textLength="44.14" lengthAdjust="spacingAndGlyphs">1.57326</text>
<rect x="917.80" y="743.50" width="48.50" height="15.50" fill="#4aa8f8"/>
<text x="919.80" y="755.50" font-size="11" fill="#000000" textLength="44.14" lengthAdjust="spacingAndGlyphs">1.54580</text>
<rect x="917.80" y="797.50" width="48.50" height="15.50" fill="#ffc800"/>
<text x="919.80" y="809.50" font-size="11" fill="#000000" textLength="44.14" lengthAdjust="spacingAndGlyphs">1.53866</text>
<g clip-path="url(#cLm)" shape-rendering="crispEdges">
<rect x="11.00" y="946.00" width="891.00" height="1.00" fill="#00ff00"/>
<rect x="17.00" y="946.00" width="10.00" height="18.00" fill="#00ff00"/>
<rect x="33.00" y="946.00" width="10.00" height="16.00" fill="#00ff00"/>
<rect x="48.00" y="946.00" width="10.00" height="6.00" fill="#00ff00"/>
<rect x="64.00" y="943.00" width="10.00" height="3.00" fill="#00ff00"/>
<rect x="79.00" y="938.00" width="10.00" height="8.00" fill="#00ff00"/>
<rect x="95.00" y="938.00" width="10.00" height="8.00" fill="#00ff00"/>
<rect x="111.00" y="934.00" width="10.00" height="12.00" fill="#00ff00"/>
<rect x="126.00" y="930.00" width="10.00" height="16.00" fill="#00ff00"/>
<rect x="142.00" y="929.00" width="10.00" height="17.00" fill="#00ff00"/>
<rect x="157.00" y="925.00" width="10.00" height="21.00" fill="#00ff00"/>
<rect x="173.00" y="929.00" width="10.00" height="17.00" fill="#00ff00"/>
<rect x="189.00" y="935.00" width="10.00" height="11.00" fill="#00ff00"/>
<rect x="204.00" y="940.00" width="10.00" height="6.00" fill="#00ff00"/>
<rect x="220.00" y="943.00" width="10.00" height="3.00" fill="#00ff00"/>
<rect x="235.00" y="946.00" width="10.00" height="4.00" fill="#00ff00"/>
<rect x="251.00" y="946.00" width="10.00" height="13.00" fill="#00ff00"/>
<rect x="267.00" y="946.00" width="10.00" height="18.00" fill="#00ff00"/>
<rect x="282.00" y="946.00" width="10.00" height="18.00" fill="#00ff00"/>
<rect x="298.00" y="946.00" width="10.00" height="16.00" fill="#00ff00"/>
<rect x="313.00" y="946.00" width="10.00" height="18.00" fill="#00ff00"/>
<rect x="329.00" y="946.00" width="10.00" height="17.00" fill="#00ff00"/>
<rect x="345.00" y="946.00" width="10.00" height="19.00" fill="#00ff00"/>
<rect x="360.00" y="946.00" width="10.00" height="19.00" fill="#00ff00"/>
<rect x="376.00" y="946.00" width="10.00" height="18.00" fill="#00ff00"/>
<rect x="391.00" y="946.00" width="10.00" height="16.00" fill="#00ff00"/>
<rect x="407.00" y="946.00" width="10.00" height="15.00" fill="#00ff00"/>
<rect x="423.00" y="946.00" width="10.00" height="10.00" fill="#00ff00"/>
<rect x="438.00" y="946.00" width="10.00" height="4.00" fill="#00ff00"/>
<rect x="454.00" y="944.00" width="10.00" height="2.00" fill="#00ff00"/>
<rect x="469.00" y="938.00" width="10.00" height="8.00" fill="#00ff00"/>
<rect x="485.00" y="936.00" width="10.00" height="10.00" fill="#00ff00"/>
<rect x="501.00" y="937.00" width="10.00" height="9.00" fill="#00ff00"/>
<rect x="516.00" y="940.00" width="10.00" height="6.00" fill="#00ff00"/>
<rect x="532.00" y="942.00" width="10.00" height="4.00" fill="#00ff00"/>
<rect x="547.00" y="945.00" width="10.00" height="1.00" fill="#00ff00"/>
<rect x="563.00" y="946.00" width="10.00" height="4.00" fill="#00ff00"/>
<rect x="579.00" y="946.00" width="10.00" height="10.00" fill="#00ff00"/>
<rect x="594.00" y="946.00" width="10.00" height="16.00" fill="#00ff00"/>
<rect x="610.00" y="946.00" width="10.00" height="19.00" fill="#00ff00"/>
<rect x="625.00" y="946.00" width="10.00" height="17.00" fill="#00ff00"/>
<rect x="641.00" y="946.00" width="10.00" height="17.00" fill="#00ff00"/>
<rect x="657.00" y="946.00" width="10.00" height="19.00" fill="#00ff00"/>
<rect x="672.00" y="946.00" width="10.00" height="18.00" fill="#00ff00"/>
<rect x="688.00" y="946.00" width="10.00" height="15.00" fill="#00ff00"/>
<rect x="703.00" y="946.00" width="10.00" height="13.00" fill="#00ff00"/>
<rect x="719.00" y="946.00" width="10.00" height="16.00" fill="#00ff00"/>
<rect x="735.00" y="946.00" width="10.00" height="18.00" fill="#00ff00"/>
<rect x="750.00" y="946.00" width="10.00" height="20.00" fill="#00ff00"/>
<rect x="766.00" y="946.00" width="10.00" height="26.00" fill="#00ff00"/>
<rect x="781.00" y="946.00" width="10.00" height="28.00" fill="#00ff00"/>
<rect x="797.00" y="946.00" width="10.00" height="31.00" fill="#00ff00"/>
<rect x="813.00" y="946.00" width="10.00" height="32.00" fill="#00ff00"/>
<rect x="828.00" y="946.00" width="10.00" height="31.00" fill="#00ff00"/>
<rect x="844.00" y="946.00" width="10.00" height="27.00" fill="#00ff00"/>
</g>
<g clip-path="url(#cLm)">
<polyline points="10.3,899.0 21.9,900.3 37.3,903.4 52.7,905.5 68.9,906.0 83.6,907.3 99.8,908.0 115.2,907.3 131.1,905.5 146.6,902.1 162.0,897.0 177.9,892.6 193.4,889.3 208.8,886.7 225.0,884.9 240.4,883.4 255.8,884.1 271.3,885.4 286.7,888.0 302.9,891.9 318.3,895.7 333.8,899.6 349.7,906.0 365.1,911.1 380.6,916.3 396.0,920.1 411.9,922.7 427.4,926.0 442.8,927.9 459.0,929.1 473.8,930.8 490.0,929.5 505.5,928.0 520.8,927.0 537.0,925.5 552.0,924.5 568.0,924.5 583.2,924.5 599.0,925.5 615.0,928.8 630.0,931.2 645.8,934.2 661.2,938.0 677.0,943.2 692.5,947.5 708.0,952.0 723.8,957.5 739.5,962.0 755.0,966.2 770.8,972.0 786.2,978.8 802.0,985.0 817.5,991.2 833.0,997.5 847.5,1003.8" fill="none" stroke="#0000ff" stroke-width="1" shape-rendering="crispEdges"/>
<polyline points="10.3,915.0 21.9,918.3 37.3,918.3 52.7,911.1 68.9,902.9 83.6,899.0 99.8,900.3 115.2,895.7 131.1,890.0 146.6,884.1 162.0,877.2 177.9,876.4 193.4,879.0 208.8,880.3 225.0,882.9 240.4,889.3 255.8,897.8 271.3,903.4 286.7,904.7 302.9,907.3 318.3,913.2 333.8,916.3 349.7,922.7 365.1,928.6 380.6,931.2 396.0,933.8 411.9,936.1 427.4,935.0 442.8,931.4 459.0,927.3 473.8,923.2 487.1,919.4 505.5,919.5 520.8,921.2 537.0,921.2 552.0,923.8 568.0,928.8 583.2,935.0 599.0,942.5 615.0,947.5 630.0,948.8 645.8,952.5 661.2,958.8 677.0,962.5 692.5,964.5 708.0,965.5 723.8,972.5 739.5,978.8 755.0,985.0 770.8,996.2 786.2,1003.8 802.0,1013.8 817.5,1021.2 833.0,1027.0 847.5,1030.5" fill="none" stroke="#ff0000" stroke-width="1" shape-rendering="crispEdges"/>
</g>
<g shape-rendering="crispEdges">
<rect x="917.00" y="869.00" width="1.00" height="168.50" fill="#9a9a9a"/>
<rect x="913.00" y="1032.00" width="4.00" height="1.00" fill="#9a9a9a"/>
<rect x="913.00" y="1025.00" width="4.00" height="1.00" fill="#9a9a9a"/>
<rect x="913.00" y="1019.00" width="4.00" height="1.00" fill="#9a9a9a"/>
<rect x="903.00" y="1012.00" width="14.00" height="1.00" fill="#9a9a9a"/>
<rect x="913.00" y="1005.00" width="4.00" height="1.00" fill="#9a9a9a"/>
<rect x="913.00" y="999.00" width="4.00" height="1.00" fill="#9a9a9a"/>
<rect x="913.00" y="992.00" width="4.00" height="1.00" fill="#9a9a9a"/>
<rect x="913.00" y="986.00" width="4.00" height="1.00" fill="#9a9a9a"/>
<rect x="910.00" y="979.00" width="7.00" height="1.00" fill="#9a9a9a"/>
<rect x="913.00" y="972.00" width="4.00" height="1.00" fill="#9a9a9a"/>
<rect x="913.00" y="966.00" width="4.00" height="1.00" fill="#9a9a9a"/>
<rect x="913.00" y="959.00" width="4.00" height="1.00" fill="#9a9a9a"/>
<rect x="913.00" y="953.00" width="4.00" height="1.00" fill="#9a9a9a"/>
<rect x="903.00" y="946.00" width="14.00" height="1.00" fill="#9a9a9a"/>
<rect x="913.00" y="939.00" width="4.00" height="1.00" fill="#9a9a9a"/>
<rect x="913.00" y="933.00" width="4.00" height="1.00" fill="#9a9a9a"/>
<rect x="913.00" y="926.00" width="4.00" height="1.00" fill="#9a9a9a"/>
<rect x="913.00" y="920.00" width="4.00" height="1.00" fill="#9a9a9a"/>
<rect x="910.00" y="913.00" width="7.00" height="1.00" fill="#9a9a9a"/>
<rect x="913.00" y="906.00" width="4.00" height="1.00" fill="#9a9a9a"/>
<rect x="913.00" y="900.00" width="4.00" height="1.00" fill="#9a9a9a"/>
<rect x="913.00" y="893.00" width="4.00" height="1.00" fill="#9a9a9a"/>
<rect x="913.00" y="887.00" width="4.00" height="1.00" fill="#9a9a9a"/>
<rect x="903.00" y="880.00" width="14.00" height="1.00" fill="#9a9a9a"/>
<rect x="913.00" y="873.00" width="4.00" height="1.00" fill="#9a9a9a"/>
</g>
<text x="921.00" y="885.00" font-size="11" fill="#9a9ea6" textLength="44.14" lengthAdjust="spacingAndGlyphs">0.01000</text>
<text x="921.00" y="951.00" font-size="11" fill="#9a9ea6" textLength="44.14" lengthAdjust="spacingAndGlyphs">0.00000</text>
<text x="920.50" y="1017.00" font-size="11" fill="#9a9ea6" textLength="48.94" lengthAdjust="spacingAndGlyphs">-0.01000</text>
<rect x="995.7" y="65.7" width="113.8" height="24" fill="#27282e" stroke="#3a3c42" stroke-width="1"/>
<text x="1004.70" y="81.20" font-size="11" font-weight="bold" fill="#a8acb4" textLength="84.00" lengthAdjust="spacingAndGlyphs">EUR/AUD, H4</text>
<path d="M1098.0 73.8 L1104.6 79.8 M1104.6 73.8 L1098.0 79.8" stroke="#8a8ea0" stroke-width="1.8"/>
<rect x="1114.7" y="65.7" width="24.5" height="24" fill="url(#plus)" stroke="#2c2d33" stroke-width="1"/>
<rect x="1122.00" y="77.00" width="10.20" height="1.60" fill="#8a8c94"/>
<rect x="1126.40" y="72.60" width="1.60" height="10.40" fill="#8a8c94"/>
<rect x="1882.30" y="64.10" width="27.70" height="13.50" fill="#0b0b0d"/>
<rect x="1884.8" y="67.3" width="8.2" height="6.4" fill="none" stroke="#6e7080" stroke-width="1.2"/>
<rect x="1884.30" y="66.70" width="9.20" height="2.00" fill="#6e7080"/>
<path d="M1899.3 67.1 L1906.1 73.9 M1906.1 67.1 L1899.3 73.9" stroke="#e05a5a" stroke-width="2"/>
<rect x="995.5" y="89.5" width="914" height="455" fill="#000" stroke="#44464e" stroke-width="1"/>
<rect x="996.00" y="90.00" width="913.00" height="44.00" fill="#1c1d21"/>
<rect x="996.00" y="134.00" width="913.00" height="3.70" fill="#2e3038"/>
<rect x="996.00" y="89.00" width="113.50" height="1.20" fill="#27282e"/>
<rect x="998.4" y="95.3" width="841.3" height="26.5" rx="6" ry="6" fill="#18191d"/>
<rect x="999.4" y="96.3" width="839.3" height="24.5" rx="5" ry="5" fill="url(#pill)"/>
<rect x="1004.00" y="96.60" width="830.00" height="1.00" fill="#62656e"/>
<rect x="1003.00" y="100.00" width="86.80" height="17.70" fill="#08090b"/>
<rect x="1004.50" y="101.80" width="85.30" height="15.90" fill="url(#combo)"/>
<rect x="1075.0" y="102.0" width="12.8" height="13.8" fill="url(#ddb)"/>
<path d="M1078.8 108.0 L1081.5 110.7 L1084.2 108.0" fill="none" stroke="#d0d4dc" stroke-width="1.1"/>
<text x="1005.50" y="114.00" font-size="12" fill="#a6b4ca" textLength="50.20" lengthAdjust="spacingAndGlyphs">EUR/AUD</text>
<rect x="1136.00" y="100.00" width="95.70" height="17.70" fill="#08090b"/>
<rect x="1137.50" y="101.80" width="94.20" height="15.90" fill="url(#combo)"/>
<rect x="1216.9" y="102.0" width="12.8" height="13.8" fill="url(#ddb)"/>
<path d="M1220.7 108.0 L1223.4 110.7 L1226.1 108.0" fill="none" stroke="#d0d4dc" stroke-width="1.1"/>
<text x="1138.50" y="114.00" font-size="12" fill="#a6b4ca" textLength="15.20" lengthAdjust="spacingAndGlyphs">H4</text>
<circle cx="1104.9" cy="108.5" r="7.1" fill="url(#ball)"/>
<ellipse cx="1104.9" cy="118.5" rx="5" ry="1.5" fill="#5a3a38" opacity="0.5"/>
<path d="M1125.4 107.0 L1132.4 107.0 L1128.9 110.7 Z" fill="#0a0a0a"/>
<rect x="1234.50" y="98.20" width="1.00" height="21.30" fill="#2a2c31"/>
<rect x="1235.50" y="98.20" width="1.00" height="21.30" fill="#464950"/>
<rect x="1246.70" y="102.00" width="14.00" height="12.70" fill="#1a2a60"/>
<rect x="1247.50" y="103.80" width="12.40" height="10.20" fill="#f4f6fa"/>
<rect x="1247.50" y="102.60" width="12.40" height="1.60" fill="#6a8ad0"/>
<polyline points="1248.0,110.0 1250.5,107.5 1253.0,110.5 1255.5,106.5 1259.3,110.0" fill="none" stroke="#d82020" stroke-width="1.3"/>
<polyline points="1250.5,108.5 1253.0,111.5 1256.0,108.5 1259.3,111.5" fill="none" stroke="#209020" stroke-width="1"/>
<rect x="1247.50" y="115.80" width="12.50" height="2.60" fill="#4a4d55"/>
<path d="M1273.2 107.0 L1280.2 107.0 L1276.7 110.7 Z" fill="#0a0a0a"/>
<rect x="1287.50" y="98.20" width="1.00" height="21.30" fill="#2a2c31"/>
<rect x="1288.50" y="98.20" width="1.00" height="21.30" fill="#464950"/>
<rect x="1291.00" y="98.00" width="29.00" height="22.00" fill="#15171b"/>
<rect x="1292.00" y="99.00" width="27.00" height="20.00" fill="#1e2530"/>
<text x="1296.75" y="110.30" font-size="10.5" fill="#b4bcc8" textLength="17.50" lengthAdjust="spacingAndGlyphs" font-weight="normal">Bid</text>
<rect x="1297.50" y="113.40" width="16.00" height="1.80" fill="#4aa8f0"/>
<rect x="1323.50" y="98.20" width="1.00" height="21.30" fill="#2a2c31"/>
<rect x="1324.50" y="98.20" width="1.00" height="21.30" fill="#464950"/>
<path d="M1344.0 107.6 L1350.8 113.2 L1336.4 113.6" fill="none" stroke="#050505" stroke-width="1.6"/>
<circle cx="1340.6" cy="103.8" r="4.4" fill="url(#mag)"/>
<circle cx="1338.5" cy="111.4" r="3.1" fill="#0c2a88"/>
<rect x="1336.80" y="110.90" width="3.40" height="1.10" fill="#ffffff"/>
<rect x="1337.95" y="109.70" width="1.10" height="3.40" fill="#ffffff"/>
<path d="M1374.8 107.6 L1381.6 113.2 L1367.2 113.6" fill="none" stroke="#050505" stroke-width="1.6"/>
<circle cx="1371.4" cy="103.8" r="4.4" fill="url(#mag)"/>
<circle cx="1369.3" cy="111.4" r="3.1" fill="#0c2a88"/>
<rect x="1367.60" y="110.90" width="3.40" height="1.10" fill="#ffffff"/>
<path d="M1401.3 99.4 L1401.3 111.0 L1403.8 109.3 L1406.5 114.0 L1408.3 113.0 L1405.8 108.5 L1410.4 108.5 Z" fill="#e4e4e4" stroke="#303030" stroke-width="0.7"/>
<circle cx="1401.3" cy="111.4" r="3.1" fill="#0c2a88"/>
<rect x="1399.60" y="110.90" width="3.40" height="1.10" fill="#ffffff"/>
<rect x="1400.75" y="109.70" width="1.10" height="3.40" fill="#ffffff"/>
<path d="M1429.4 102.5 V114.5" stroke="#080808" stroke-width="1.2"/>
<path d="M1427.4 104.6 L1429.4 102.0 L1431.4 104.6 Z M1427.4 112.4 L1429.4 115.0 L1431.4 112.4 Z" fill="#080808"/>
<path d="M1438.3 110.4 L1441.2 113.4" stroke="#d07010" stroke-width="1.6"/>
<circle cx="1436.2" cy="107.6" r="3.6" fill="#c8ecfa" stroke="#101010" stroke-width="0.9"/>
<path d="M1455.4 106.8 L1462.4 106.8 L1458.9 110.5 Z" fill="#0a0a0a"/>
<rect x="1476.00" y="101.90" width="10.80" height="1.30" fill="#080808"/>
<rect x="1476.00" y="113.80" width="10.80" height="1.30" fill="#080808"/>
<path d="M1481.4 103.0 L1478.6 106.4 L1484.2 106.4 Z M1481.4 113.6 L1478.6 110.2 L1484.2 110.2 Z" fill="#28a828"/>
<rect x="1480.60" y="105.50" width="1.70" height="5.50" fill="#28a828"/>
<path d="M1505.6 109.8 Q1512.0 103.2 1518.4 109.8 Q1512.0 116.2 1505.6 109.8 Z" fill="#a4a6aa" stroke="#3a3c40" stroke-width="0.6"/>
<circle cx="1512.0" cy="109.6" r="2.4" fill="#6e7074"/>
<path d="M1507.2 104.2 Q1512.5 98.5 1517.6 103.0" fill="none" stroke="#1e2024" stroke-width="1.1"/>
<path d="M1516.0 104.5 L1520.0 101.0 L1520.0 105.5 Z" fill="#1e2024"/>
<rect x="1531.30" y="98.20" width="1.00" height="21.30" fill="#2a2c31"/>
<rect x="1532.30" y="98.20" width="1.00" height="21.30" fill="#464950"/>
<path d="M1541.1 111.4 L1552.3 100.2 L1556.8 104.3 L1545.3 115.3 Z" fill="url(#rul)" stroke="#5a4000" stroke-width="0.8"/>
<path d="M1543.6 109.2 l1.3 1.3" stroke="#303010" stroke-width="0.8"/>
<path d="M1546.0 106.9 l1.3 1.3" stroke="#303010" stroke-width="0.8"/>
<path d="M1548.4 104.5 l1.3 1.3" stroke="#303010" stroke-width="0.8"/>
<path d="M1550.8 102.2 l1.3 1.3" stroke="#303010" stroke-width="0.8"/>
<path d="M1568.9 106.7 L1575.9 106.7 L1572.4 110.4 Z" fill="#0a0a0a"/>
<rect x="1588.3" y="101.9" width="15.3" height="3.2" rx="1.5" fill="#1a1b1e"/>
<rect x="1590.50" y="103.00" width="10.90" height="1.00" fill="#9a9ca2"/>
<rect x="1588.3" y="106.9" width="15.3" height="3.2" rx="1.5" fill="#1a1b1e"/>
<rect x="1590.50" y="108.00" width="10.90" height="1.00" fill="#9a9ca2"/>
<rect x="1588.3" y="111.8" width="10.1" height="3.2" rx="1.5" fill="#1a1b1e"/>
<rect x="1590.50" y="112.90" width="5.70" height="1.00" fill="#9a9ca2"/>
<path d="M1600.2 116.3 V111.5 H1603.3 M1600.2 113.6 H1602.5" fill="none" stroke="#d8d8d8" stroke-width="2.6"/>
<path d="M1600.2 116.3 V111.5 H1603.3 M1600.2 113.6 H1602.5" fill="none" stroke="#080808" stroke-width="1.3"/>
<path d="M1615.2 106.8 L1622.2 106.8 L1618.7 110.5 Z" fill="#0a0a0a"/>
<path d="M1635.3 114.4 L1646.6 103.5" stroke="#080808" stroke-width="2.6"/>
<path d="M1635.3 114.4 L1646.6 103.5" stroke="#7ac020" stroke-width="1" stroke-dasharray="1,0.6"/>
<rect x="1633.70" y="112.80" width="3.20" height="3.20" fill="#080808"/>
<rect x="1634.70" y="113.80" width="1.20" height="1.20" fill="#e0e0e0"/>
<rect x="1645.00" y="101.90" width="3.20" height="3.20" fill="#080808"/>
<rect x="1646.00" y="102.90" width="1.20" height="1.20" fill="#e0e0e0"/>
<path d="M1661.5 106.8 L1668.5 106.8 L1665.0 110.5 Z" fill="#0a0a0a"/>
<ellipse cx="1686.9" cy="109.1" rx="7.2" ry="5.9" fill="url(#ell)" stroke="#56729e" stroke-width="0.8"/>
<path d="M1707.4 106.8 L1714.4 106.8 L1710.9 110.5 Z" fill="#0a0a0a"/>
<g fill="none" stroke="#080808" stroke-width="1.3" shape-rendering="crispEdges"><path d="M1726.6 108.0 V102.5 H1730.0 V108.0 M1726.6 105.2 H1730.0"/><path d="M1731.6 108.0 V102.5 H1734.5 V108.0 H1731.6 M1731.6 105.2 H1734.5"/><path d="M1740.2 102.5 H1736.4 V108.0 H1740.2"/></g>
<circle cx="1736.6" cy="111.3" r="3.1" fill="#0c2a88"/>
<rect x="1734.90" y="110.80" width="3.40" height="1.10" fill="#ffffff"/>
<rect x="1736.05" y="109.60" width="1.10" height="3.40" fill="#ffffff"/>
<rect x="1752.10" y="98.20" width="1.00" height="21.30" fill="#2a2c31"/>
<rect x="1753.10" y="98.20" width="1.00" height="21.30" fill="#464950"/>
<path d="M1764.0 111.7 L1770.6 105.0 L1774.6 108.8 L1768.2 115.3 Z" fill="#d4d4d4" stroke="#303030" stroke-width="0.7"/>
<path d="M1770.6 105.0 L1773.8 101.6 L1778.3 105.6 L1774.6 108.8 Z" fill="#c04858" stroke="#402020" stroke-width="0.7"/>
<rect x="1789.10" y="98.20" width="1.00" height="21.30" fill="#2a2c31"/>
<rect x="1790.10" y="98.20" width="1.00" height="21.30" fill="#464950"/>
<path d="M1806.4 106.5 V111.5 M1801.5 112.0 V109.5 H1811.9 V112.0" stroke="#243410" stroke-width="1.1" fill="none"/>
<rect x="1804.10" y="102.00" width="4.70" height="4.80" fill="#1848d8"/>
<rect x="1799.20" y="111.40" width="4.50" height="4.30" fill="#243410"/>
<rect x="1799.80" y="112.00" width="3.30" height="3.10" fill="#5a8a18"/>
<rect x="1804.60" y="111.40" width="4.50" height="4.30" fill="#243410"/>
<rect x="1805.20" y="112.00" width="3.30" height="3.10" fill="#5a8a18"/>
<rect x="1809.60" y="111.40" width="4.50" height="4.30" fill="#243410"/>
<rect x="1810.20" y="112.00" width="3.30" height="3.10" fill="#5a8a18"/>
<rect x="1823.60" y="98.20" width="1.00" height="21.30" fill="#2a2c31"/>
<rect x="1824.60" y="98.20" width="1.00" height="21.30" fill="#464950"/>
<rect x="1827.00" y="104.00" width="7.00" height="1.10" fill="#080808"/>
<rect x="1827.00" y="106.00" width="7.00" height="1.10" fill="#080808"/>
<rect x="1827.00" y="108.00" width="7.00" height="1.10" fill="#080808"/>
<rect x="1827.00" y="110.00" width="7.00" height="1.10" fill="#080808"/>
<path d="M1830.0 110.2 L1837.0 110.2 L1833.5 113.9 Z" fill="#0a0a0a"/>
<rect x="996.00" y="156.50" width="855.50" height="1.00" fill="#9a9a9a"/>
<rect x="1851.00" y="157.00" width="1.00" height="361.50" fill="#9a9a9a"/>
<rect x="996.00" y="518.00" width="855.50" height="1.00" fill="#9a9a9a"/>
<rect x="995.7" y="561.7" width="113.8" height="24" fill="#27282e" stroke="#3a3c42" stroke-width="1"/>
<text x="1004.70" y="577.20" font-size="11" font-weight="bold" fill="#a8acb4" textLength="84.00" lengthAdjust="spacingAndGlyphs">EUR/AUD, H2</text>
<path d="M1098.0 569.8 L1104.6 575.8 M1104.6 569.8 L1098.0 575.8" stroke="#8a8ea0" stroke-width="1.8"/>
<rect x="1114.7" y="561.7" width="24.5" height="24" fill="url(#plus)" stroke="#2c2d33" stroke-width="1"/>
<rect x="1122.00" y="573.00" width="10.20" height="1.60" fill="#8a8c94"/>
<rect x="1126.40" y="568.60" width="1.60" height="10.40" fill="#8a8c94"/>
<rect x="1882.30" y="560.10" width="27.70" height="13.50" fill="#0b0b0d"/>
<rect x="1884.8" y="563.3" width="8.2" height="6.4" fill="none" stroke="#6e7080" stroke-width="1.2"/>
<rect x="1884.30" y="562.70" width="9.20" height="2.00" fill="#6e7080"/>
<path d="M1899.3 563.1 L1906.1 569.9 M1906.1 563.1 L1899.3 569.9" stroke="#e05a5a" stroke-width="2"/>
<rect x="995.5" y="585.5" width="914" height="455" fill="#000" stroke="#4a4b55" stroke-width="1"/>
<rect x="996.00" y="586.00" width="913.00" height="44.00" fill="#1c1d21"/>
<rect x="996.00" y="630.00" width="913.00" height="3.70" fill="#2e3038"/>
<rect x="996.00" y="585.00" width="113.50" height="1.20" fill="#27282e"/>
<rect x="998.4" y="591.3" width="841.3" height="26.5" rx="6" ry="6" fill="#18191d"/>
<rect x="999.4" y="592.3" width="839.3" height="24.5" rx="5" ry="5" fill="url(#pill)"/>
<rect x="1004.00" y="592.60" width="830.00" height="1.00" fill="#62656e"/>
<rect x="1003.00" y="596.00" width="86.80" height="17.70" fill="#08090b"/>
<rect x="1004.50" y="597.80" width="85.30" height="15.90" fill="url(#combo)"/>
<rect x="1075.0" y="598.0" width="12.8" height="13.8" fill="url(#ddb)"/>
<path d="M1078.8 604.0 L1081.5 606.7 L1084.2 604.0" fill="none" stroke="#d0d4dc" stroke-width="1.1"/>
<text x="1005.50" y="610.00" font-size="12" fill="#a6b4ca" textLength="50.20" lengthAdjust="spacingAndGlyphs">EUR/AUD</text>
<rect x="1136.00" y="596.00" width="95.70" height="17.70" fill="#08090b"/>
<rect x="1137.50" y="597.80" width="94.20" height="15.90" fill="url(#combo)"/>
<rect x="1216.9" y="598.0" width="12.8" height="13.8" fill="url(#ddb)"/>
<path d="M1220.7 604.0 L1223.4 606.7 L1226.1 604.0" fill="none" stroke="#d0d4dc" stroke-width="1.1"/>
<text x="1138.50" y="610.00" font-size="12" fill="#a6b4ca" textLength="14.80" lengthAdjust="spacingAndGlyphs">H2</text>
<circle cx="1104.9" cy="604.5" r="7.1" fill="url(#ball)"/>
<ellipse cx="1104.9" cy="614.5" rx="5" ry="1.5" fill="#5a3a38" opacity="0.5"/>
<path d="M1125.4 603.0 L1132.4 603.0 L1128.9 606.7 Z" fill="#0a0a0a"/>
<rect x="1234.50" y="594.20" width="1.00" height="21.30" fill="#2a2c31"/>
<rect x="1235.50" y="594.20" width="1.00" height="21.30" fill="#464950"/>
<rect x="1246.70" y="598.00" width="14.00" height="12.70" fill="#1a2a60"/>
<rect x="1247.50" y="599.80" width="12.40" height="10.20" fill="#f4f6fa"/>
<rect x="1247.50" y="598.60" width="12.40" height="1.60" fill="#6a8ad0"/>
<polyline points="1248.0,606.0 1250.5,603.5 1253.0,606.5 1255.5,602.5 1259.3,606.0" fill="none" stroke="#d82020" stroke-width="1.3"/>
<polyline points="1250.5,604.5 1253.0,607.5 1256.0,604.5 1259.3,607.5" fill="none" stroke="#209020" stroke-width="1"/>
<rect x="1247.50" y="611.80" width="12.50" height="2.60" fill="#4a4d55"/>
<path d="M1273.2 603.0 L1280.2 603.0 L1276.7 606.7 Z" fill="#0a0a0a"/>
<rect x="1287.50" y="594.20" width="1.00" height="21.30" fill="#2a2c31"/>
<rect x="1288.50" y="594.20" width="1.00" height="21.30" fill="#464950"/>
<rect x="1291.00" y="594.00" width="29.00" height="22.00" fill="#15171b"/>
<rect x="1292.00" y="595.00" width="27.00" height="20.00" fill="#1e2530"/>
<text x="1296.75" y="606.30" font-size="10.5" fill="#b4bcc8" textLength="17.50" lengthAdjust="spacingAndGlyphs" font-weight="normal">Bid</text>
<rect x="1297.50" y="609.40" width="16.00" height="1.80" fill="#4aa8f0"/>
<rect x="1323.50" y="594.20" width="1.00" height="21.30" fill="#2a2c31"/>
<rect x="1324.50" y="594.20" width="1.00" height="21.30" fill="#464950"/>
<path d="M1344.0 603.6 L1350.8 609.2 L1336.4 609.6" fill="none" stroke="#050505" stroke-width="1.6"/>
<circle cx="1340.6" cy="599.8" r="4.4" fill="url(#mag)"/>
<circle cx="1338.5" cy="607.4" r="3.1" fill="#0c2a88"/>
<rect x="1336.80" y="606.90" width="3.40" height="1.10" fill="#ffffff"/>
<rect x="1337.95" y="605.70" width="1.10" height="3.40" fill="#ffffff"/>
<path d="M1374.8 603.6 L1381.6 609.2 L1367.2 609.6" fill="none" stroke="#050505" stroke-width="1.6"/>
<circle cx="1371.4" cy="599.8" r="4.4" fill="url(#mag)"/>
<circle cx="1369.3" cy="607.4" r="3.1" fill="#0c2a88"/>
<rect x="1367.60" y="606.90" width="3.40" height="1.10" fill="#ffffff"/>
<path d="M1401.3 595.4 L1401.3 607.0 L1403.8 605.3 L1406.5 610.0 L1408.3 609.0 L1405.8 604.5 L1410.4 604.5 Z" fill="#e4e4e4" stroke="#303030" stroke-width="0.7"/>
<circle cx="1401.3" cy="607.4" r="3.1" fill="#0c2a88"/>
<rect x="1399.60" y="606.90" width="3.40" height="1.10" fill="#ffffff"/>
<rect x="1400.75" y="605.70" width="1.10" height="3.40" fill="#ffffff"/>
<path d="M1429.4 598.5 V610.5" stroke="#080808" stroke-width="1.2"/>
<path d="M1427.4 600.6 L1429.4 598.0 L1431.4 600.6 Z M1427.4 608.4 L1429.4 611.0 L1431.4 608.4 Z" fill="#080808"/>
<path d="M1438.3 606.4 L1441.2 609.4" stroke="#d07010" stroke-width="1.6"/>
<circle cx="1436.2" cy="603.6" r="3.6" fill="#c8ecfa" stroke="#101010" stroke-width="0.9"/>
<path d="M1455.4 602.8 L1462.4 602.8 L1458.9 606.5 Z" fill="#0a0a0a"/>
<rect x="1476.00" y="597.90" width="10.80" height="1.30" fill="#080808"/>
<rect x="1476.00" y="609.80" width="10.80" height="1.30" fill="#080808"/>
<path d="M1481.4 599.0 L1478.6 602.4 L1484.2 602.4 Z M1481.4 609.6 L1478.6 606.2 L1484.2 606.2 Z" fill="#28a828"/>
<rect x="1480.60" y="601.50" width="1.70" height="5.50" fill="#28a828"/>
<path d="M1505.6 605.8 Q1512.0 599.2 1518.4 605.8 Q1512.0 612.2 1505.6 605.8 Z" fill="#a4a6aa" stroke="#3a3c40" stroke-width="0.6"/>
<circle cx="1512.0" cy="605.6" r="2.4" fill="#6e7074"/>
<path d="M1507.2 600.2 Q1512.5 594.5 1517.6 599.0" fill="none" stroke="#1e2024" stroke-width="1.1"/>
<path d="M1516.0 600.5 L1520.0 597.0 L1520.0 601.5 Z" fill="#1e2024"/>
<rect x="1531.30" y="594.20" width="1.00" height="21.30" fill="#2a2c31"/>
<rect x="1532.30" y="594.20" width="1.00" height="21.30" fill="#464950"/>
<path d="M1541.1 607.4 L1552.3 596.2 L1556.8 600.3 L1545.3 611.3 Z" fill="url(#rul)" stroke="#5a4000" stroke-width="0.8"/>
<path d="M1543.6 605.2 l1.3 1.3" stroke="#303010" stroke-width="0.8"/>
<path d="M1546.0 602.9 l1.3 1.3" stroke="#303010" stroke-width="0.8"/>
<path d="M1548.4 600.5 l1.3 1.3" stroke="#303010" stroke-width="0.8"/>
<path d="M1550.8 598.1 l1.3 1.3" stroke="#303010" stroke-width="0.8"/>
<path d="M1568.9 602.7 L1575.9 602.7 L1572.4 606.4 Z" fill="#0a0a0a"/>
<rect x="1588.3" y="597.9" width="15.3" height="3.2" rx="1.5" fill="#1a1b1e"/>
<rect x="1590.50" y="599.00" width="10.90" height="1.00" fill="#9a9ca2"/>
<rect x="1588.3" y="602.9" width="15.3" height="3.2" rx="1.5" fill="#1a1b1e"/>
<rect x="1590.50" y="604.00" width="10.90" height="1.00" fill="#9a9ca2"/>
<rect x="1588.3" y="607.8" width="10.1" height="3.2" rx="1.5" fill="#1a1b1e"/>
<rect x="1590.50" y="608.90" width="5.70" height="1.00" fill="#9a9ca2"/>
<path d="M1600.2 612.3 V607.5 H1603.3 M1600.2 609.6 H1602.5" fill="none" stroke="#d8d8d8" stroke-width="2.6"/>
<path d="M1600.2 612.3 V607.5 H1603.3 M1600.2 609.6 H1602.5" fill="none" stroke="#080808" stroke-width="1.3"/>
<path d="M1615.2 602.8 L1622.2 602.8 L1618.7 606.5 Z" fill="#0a0a0a"/>
<path d="M1635.3 610.4 L1646.6 599.5" stroke="#080808" stroke-width="2.6"/>
<path d="M1635.3 610.4 L1646.6 599.5" stroke="#7ac020" stroke-width="1" stroke-dasharray="1,0.6"/>
<rect x="1633.70" y="608.80" width="3.20" height="3.20" fill="#080808"/>
<rect x="1634.70" y="609.80" width="1.20" height="1.20" fill="#e0e0e0"/>
<rect x="1645.00" y="597.90" width="3.20" height="3.20" fill="#080808"/>
<rect x="1646.00" y="598.90" width="1.20" height="1.20" fill="#e0e0e0"/>
<path d="M1661.5 602.8 L1668.5 602.8 L1665.0 606.5 Z" fill="#0a0a0a"/>
<ellipse cx="1686.9" cy="605.1" rx="7.2" ry="5.9" fill="url(#ell)" stroke="#56729e" stroke-width="0.8"/>
<path d="M1707.4 602.8 L1714.4 602.8 L1710.9 606.5 Z" fill="#0a0a0a"/>
<g fill="none" stroke="#080808" stroke-width="1.3" shape-rendering="crispEdges"><path d="M1726.6 604.0 V598.5 H1730.0 V604.0 M1726.6 601.2 H1730.0"/><path d="M1731.6 604.0 V598.5 H1734.5 V604.0 H1731.6 M1731.6 601.2 H1734.5"/><path d="M1740.2 598.5 H1736.4 V604.0 H1740.2"/></g>
<circle cx="1736.6" cy="607.3" r="3.1" fill="#0c2a88"/>
<rect x="1734.90" y="606.80" width="3.40" height="1.10" fill="#ffffff"/>
<rect x="1736.05" y="605.60" width="1.10" height="3.40" fill="#ffffff"/>
<rect x="1752.10" y="594.20" width="1.00" height="21.30" fill="#2a2c31"/>
<rect x="1753.10" y="594.20" width="1.00" height="21.30" fill="#464950"/>
<path d="M1764.0 607.7 L1770.6 601.0 L1774.6 604.8 L1768.2 611.3 Z" fill="#d4d4d4" stroke="#303030" stroke-width="0.7"/>
<path d="M1770.6 601.0 L1773.8 597.6 L1778.3 601.6 L1774.6 604.8 Z" fill="#c04858" stroke="#402020" stroke-width="0.7"/>
<rect x="1789.10" y="594.20" width="1.00" height="21.30" fill="#2a2c31"/>
<rect x="1790.10" y="594.20" width="1.00" height="21.30" fill="#464950"/>
<path d="M1806.4 602.5 V607.5 M1801.5 608.0 V605.5 H1811.9 V608.0" stroke="#243410" stroke-width="1.1" fill="none"/>
<rect x="1804.10" y="598.00" width="4.70" height="4.80" fill="#1848d8"/>
<rect x="1799.20" y="607.40" width="4.50" height="4.30" fill="#243410"/>
<rect x="1799.80" y="608.00" width="3.30" height="3.10" fill="#5a8a18"/>
<rect x="1804.60" y="607.40" width="4.50" height="4.30" fill="#243410"/>
<rect x="1805.20" y="608.00" width="3.30" height="3.10" fill="#5a8a18"/>
<rect x="1809.60" y="607.40" width="4.50" height="4.30" fill="#243410"/>
<rect x="1810.20" y="608.00" width="3.30" height="3.10" fill="#5a8a18"/>
<rect x="1823.60" y="594.20" width="1.00" height="21.30" fill="#2a2c31"/>
<rect x="1824.60" y="594.20" width="1.00" height="21.30" fill="#464950"/>
<rect x="1827.00" y="600.00" width="7.00" height="1.10" fill="#080808"/>
<rect x="1827.00" y="602.00" width="7.00" height="1.10" fill="#080808"/>
<rect x="1827.00" y="604.00" width="7.00" height="1.10" fill="#080808"/>
<rect x="1827.00" y="606.00" width="7.00" height="1.10" fill="#080808"/>
<path d="M1830.0 606.2 L1837.0 606.2 L1833.5 609.9 Z" fill="#0a0a0a"/>
<rect x="996.00" y="652.50" width="855.50" height="1.00" fill="#9a9a9a"/>
<rect x="1851.00" y="653.00" width="1.00" height="361.50" fill="#9a9a9a"/>
<rect x="996.00" y="1014.00" width="855.50" height="1.00" fill="#9a9a9a"/>
<rect x="997.00" y="506.00" width="1.00" height="12.00" fill="#9a9a9a"/>
<rect x="1012.00" y="515.00" width="1.00" height="3.00" fill="#9a9a9a"/>
<rect x="1026.00" y="512.00" width="1.00" height="6.00" fill="#9a9a9a"/>
<rect x="1040.00" y="515.00" width="1.00" height="3.00" fill="#9a9a9a"/>
<rect x="1055.00" y="512.00" width="1.00" height="6.00" fill="#9a9a9a"/>
<rect x="1069.00" y="515.00" width="1.00" height="3.00" fill="#9a9a9a"/>
<rect x="1084.00" y="512.00" width="1.00" height="6.00" fill="#9a9a9a"/>
<rect x="1098.00" y="515.00" width="1.00" height="3.00" fill="#9a9a9a"/>
<rect x="1112.00" y="506.00" width="1.00" height="12.00" fill="#9a9a9a"/>
<rect x="1127.00" y="515.00" width="1.00" height="3.00" fill="#9a9a9a"/>
<rect x="1141.00" y="512.00" width="1.00" height="6.00" fill="#9a9a9a"/>
<rect x="1155.00" y="515.00" width="1.00" height="3.00" fill="#9a9a9a"/>
<rect x="1170.00" y="512.00" width="1.00" height="6.00" fill="#9a9a9a"/>
<rect x="1184.00" y="515.00" width="1.00" height="3.00" fill="#9a9a9a"/>
<rect x="1199.00" y="512.00" width="1.00" height="6.00" fill="#9a9a9a"/>
<rect x="1213.00" y="515.00" width="1.00" height="3.00" fill="#9a9a9a"/>
<rect x="1227.00" y="506.00" width="1.00" height="12.00" fill="#9a9a9a"/>
<rect x="1242.00" y="515.00" width="1.00" height="3.00" fill="#9a9a9a"/>
<rect x="1256.00" y="512.00" width="1.00" height="6.00" fill="#9a9a9a"/>
<rect x="1270.00" y="515.00" width="1.00" height="3.00" fill="#9a9a9a"/>
<rect x="1285.00" y="512.00" width="1.00" height="6.00" fill="#9a9a9a"/>
<rect x="1299.00" y="515.00" width="1.00" height="3.00" fill="#9a9a9a"/>
<rect x="1314.00" y="512.00" width="1.00" height="6.00" fill="#9a9a9a"/>
<rect x="1328.00" y="515.00" width="1.00" height="3.00" fill="#9a9a9a"/>
<rect x="1342.00" y="506.00" width="1.00" height="12.00" fill="#9a9a9a"/>
<rect x="1357.00" y="515.00" width="1.00" height="3.00" fill="#9a9a9a"/>
<rect x="1371.00" y="512.00" width="1.00" height="6.00" fill="#9a9a9a"/>
<rect x="1385.00" y="515.00" width="1.00" height="3.00" fill="#9a9a9a"/>
<rect x="1400.00" y="512.00" width="1.00" height="6.00" fill="#9a9a9a"/>
<rect x="1414.00" y="515.00" width="1.00" height="3.00" fill="#9a9a9a"/>
<rect x="1429.00" y="512.00" width="1.00" height="6.00" fill="#9a9a9a"/>
<rect x="1443.00" y="515.00" width="1.00" height="3.00" fill="#9a9a9a"/>
<rect x="1457.00" y="506.00" width="1.00" height="12.00" fill="#9a9a9a"/>
<rect x="1472.00" y="515.00" width="1.00" height="3.00" fill="#9a9a9a"/>
<rect x="1486.00" y="512.00" width="1.00" height="6.00" fill="#9a9a9a"/>
<rect x="1500.00" y="515.00" width="1.00" height="3.00" fill="#9a9a9a"/>
<rect x="1515.00" y="512.00" width="1.00" height="6.00" fill="#9a9a9a"/>
<rect x="1529.00" y="515.00" width="1.00" height="3.00" fill="#9a9a9a"/>
<rect x="1544.00" y="512.00" width="1.00" height="6.00" fill="#9a9a9a"/>
<rect x="1558.00" y="515.00" width="1.00" height="3.00" fill="#9a9a9a"/>
<rect x="1572.00" y="506.00" width="1.00" height="12.00" fill="#9a9a9a"/>
<rect x="1587.00" y="515.00" width="1.00" height="3.00" fill="#9a9a9a"/>
<rect x="1601.00" y="512.00" width="1.00" height="6.00" fill="#9a9a9a"/>
<rect x="1615.00" y="515.00" width="1.00" height="3.00" fill="#9a9a9a"/>
<rect x="1630.00" y="512.00" width="1.00" height="6.00" fill="#9a9a9a"/>
<rect x="1644.00" y="515.00" width="1.00" height="3.00" fill="#9a9a9a"/>
<rect x="1659.00" y="512.00" width="1.00" height="6.00" fill="#9a9a9a"/>
<rect x="1673.00" y="515.00" width="1.00" height="3.00" fill="#9a9a9a"/>
<rect x="1687.00" y="506.00" width="1.00" height="12.00" fill="#9a9a9a"/>
<rect x="1702.00" y="515.00" width="1.00" height="3.00" fill="#9a9a9a"/>
<rect x="1716.00" y="512.00" width="1.00" height="6.00" fill="#9a9a9a"/>
<rect x="1730.00" y="515.00" width="1.00" height="3.00" fill="#9a9a9a"/>
<rect x="1745.00" y="512.00" width="1.00" height="6.00" fill="#9a9a9a"/>
<rect x="1759.00" y="515.00" width="1.00" height="3.00" fill="#9a9a9a"/>
<rect x="1774.00" y="512.00" width="1.00" height="6.00" fill="#9a9a9a"/>
<rect x="1788.00" y="515.00" width="1.00" height="3.00" fill="#9a9a9a"/>
<rect x="1802.00" y="506.00" width="1.00" height="12.00" fill="#9a9a9a"/>
<rect x="1817.00" y="515.00" width="1.00" height="3.00" fill="#9a9a9a"/>
<rect x="1831.00" y="512.00" width="1.00" height="6.00" fill="#9a9a9a"/>
<rect x="1845.00" y="515.00" width="1.00" height="3.00" fill="#9a9a9a"/>
<text x="996.70" y="535.80" font-size="11" fill="#9a9ea6" textLength="101.60" lengthAdjust="spacingAndGlyphs">18/05/2018 01:00</text>
<text x="1191.00" y="535.80" font-size="11" fill="#9a9ea6" textLength="69.40" lengthAdjust="spacingAndGlyphs">21/05 17:00</text>
<text x="1306.10" y="535.80" font-size="11" fill="#9a9ea6" textLength="69.40" lengthAdjust="spacingAndGlyphs">22/05 13:00</text>
<text x="1421.10" y="535.80" font-size="11" fill="#9a9ea6" textLength="69.40" lengthAdjust="spacingAndGlyphs">23/05 09:00</text>
<text x="1536.10" y="535.80" font-size="11" fill="#9a9ea6" textLength="69.40" lengthAdjust="spacingAndGlyphs">24/05 05:00</text>
<text x="1651.10" y="535.80" font-size="11" fill="#9a9ea6" textLength="69.40" lengthAdjust="spacingAndGlyphs">25/05 01:00</text>
<text x="1766.40" y="535.80" font-size="11" fill="#9a9ea6" textLength="69.40" lengthAdjust="spacingAndGlyphs">27/05 21:00</text>
<rect x="996.00" y="157.00" width="1.00" height="11.00" fill="#9a9a9a"/>
<rect x="1002.00" y="157.00" width="1.00" height="3.00" fill="#9a9a9a"/>
<rect x="1016.00" y="157.00" width="1.00" height="3.00" fill="#9a9a9a"/>
<rect x="1031.00" y="157.00" width="1.00" height="6.00" fill="#9a9a9a"/>
<rect x="1046.00" y="157.00" width="1.00" height="3.00" fill="#9a9a9a"/>
<rect x="1060.00" y="157.00" width="1.00" height="6.00" fill="#9a9a9a"/>
<rect x="1074.00" y="157.00" width="1.00" height="3.00" fill="#9a9a9a"/>
<rect x="1095.00" y="157.00" width="1.00" height="3.00" fill="#9a9a9a"/>
<rect x="1100.00" y="157.00" width="1.00" height="6.00" fill="#9a9a9a"/>
<rect x="1106.00" y="157.00" width="1.00" height="3.00" fill="#9a9a9a"/>
<rect x="1130.00" y="157.00" width="1.00" height="3.00" fill="#9a9a9a"/>
<rect x="1147.00" y="157.00" width="1.00" height="6.00" fill="#9a9a9a"/>
<rect x="1164.00" y="157.00" width="1.00" height="3.00" fill="#9a9a9a"/>
<rect x="1181.00" y="157.00" width="1.00" height="6.00" fill="#9a9a9a"/>
<rect x="1198.00" y="157.00" width="1.00" height="3.00" fill="#9a9a9a"/>
<rect x="1216.00" y="157.00" width="1.00" height="6.00" fill="#9a9a9a"/>
<rect x="1232.00" y="157.00" width="1.00" height="3.00" fill="#9a9a9a"/>
<rect x="1268.00" y="157.00" width="1.00" height="3.00" fill="#9a9a9a"/>
<rect x="1284.00" y="157.00" width="1.00" height="6.00" fill="#9a9a9a"/>
<rect x="1302.00" y="157.00" width="1.00" height="3.00" fill="#9a9a9a"/>
<rect x="1320.00" y="157.00" width="1.00" height="6.00" fill="#9a9a9a"/>
<rect x="1336.00" y="157.00" width="1.00" height="3.00" fill="#9a9a9a"/>
<rect x="1353.00" y="157.00" width="1.00" height="6.00" fill="#9a9a9a"/>
<rect x="1370.00" y="157.00" width="1.00" height="3.00" fill="#9a9a9a"/>
<rect x="1405.00" y="157.00" width="1.00" height="3.00" fill="#9a9a9a"/>
<rect x="1422.00" y="157.00" width="1.00" height="6.00" fill="#9a9a9a"/>
<rect x="1440.00" y="157.00" width="1.00" height="3.00" fill="#9a9a9a"/>
<rect x="1458.00" y="157.00" width="1.00" height="6.00" fill="#9a9a9a"/>
<rect x="1475.00" y="157.00" width="1.00" height="3.00" fill="#9a9a9a"/>
<rect x="1491.00" y="157.00" width="1.00" height="6.00" fill="#9a9a9a"/>
<rect x="1508.00" y="157.00" width="1.00" height="3.00" fill="#9a9a9a"/>
<rect x="1543.00" y="157.00" width="1.00" height="3.00" fill="#9a9a9a"/>
<rect x="1560.00" y="157.00" width="1.00" height="6.00" fill="#9a9a9a"/>
<rect x="1578.00" y="157.00" width="1.00" height="3.00" fill="#9a9a9a"/>
<rect x="1595.00" y="157.00" width="1.00" height="6.00" fill="#9a9a9a"/>
<rect x="1612.00" y="157.00" width="1.00" height="3.00" fill="#9a9a9a"/>
<rect x="1629.00" y="157.00" width="1.00" height="6.00" fill="#9a9a9a"/>
<rect x="1646.00" y="157.00" width="1.00" height="3.00" fill="#9a9a9a"/>
<rect x="1678.00" y="157.00" width="1.00" height="3.00" fill="#9a9a9a"/>
<rect x="1692.00" y="157.00" width="1.00" height="6.00" fill="#9a9a9a"/>
<rect x="1708.00" y="157.00" width="1.00" height="3.00" fill="#9a9a9a"/>
<rect x="1722.00" y="157.00" width="1.00" height="6.00" fill="#9a9a9a"/>
<rect x="1735.00" y="157.00" width="1.00" height="3.00" fill="#9a9a9a"/>
<rect x="1750.00" y="157.00" width="1.00" height="6.00" fill="#9a9a9a"/>
<rect x="1765.00" y="157.00" width="1.00" height="3.00" fill="#9a9a9a"/>
<rect x="1790.00" y="157.00" width="1.00" height="6.00" fill="#9a9a9a"/>
<rect x="1796.00" y="157.00" width="1.00" height="6.00" fill="#9a9a9a"/>
<rect x="1819.00" y="157.00" width="1.00" height="3.00" fill="#9a9a9a"/>
<rect x="1837.00" y="157.00" width="1.00" height="6.00" fill="#9a9a9a"/>
<text x="1072.26" y="150.80" font-size="11" fill="#9a9ea6" textLength="32.98" lengthAdjust="spacingAndGlyphs">20/05</text>
<text x="1233.01" y="150.80" font-size="11" fill="#9a9ea6" textLength="32.98" lengthAdjust="spacingAndGlyphs">22/05</text>
<text x="1371.01" y="150.80" font-size="11" fill="#9a9ea6" textLength="32.98" lengthAdjust="spacingAndGlyphs">23/05</text>
<text x="1509.11" y="150.80" font-size="11" fill="#9a9ea6" textLength="32.98" lengthAdjust="spacingAndGlyphs">24/05</text>
<text x="1647.26" y="150.80" font-size="11" fill="#9a9ea6" textLength="32.98" lengthAdjust="spacingAndGlyphs">25/05</text>
<text x="1761.81" y="150.80" font-size="11" fill="#9a9ea6" textLength="32.98" lengthAdjust="spacingAndGlyphs">27/05</text>
<g shape-rendering="crispEdges">
<rect x="1851.00" y="157.00" width="1.00" height="361.00" fill="#9a9a9a"/>
<rect x="1847.00" y="511.00" width="4.00" height="1.00" fill="#9a9a9a"/>
<rect x="1847.00" y="503.00" width="4.00" height="1.00" fill="#9a9a9a"/>
<rect x="1837.00" y="494.00" width="14.00" height="1.00" fill="#9a9a9a"/>
<rect x="1847.00" y="485.00" width="4.00" height="1.00" fill="#9a9a9a"/>
<rect x="1847.00" y="477.00" width="4.00" height="1.00" fill="#9a9a9a"/>
<rect x="1847.00" y="468.00" width="4.00" height="1.00" fill="#9a9a9a"/>
<rect x="1847.00" y="460.00" width="4.00" height="1.00" fill="#9a9a9a"/>
<rect x="1844.00" y="451.00" width="7.00" height="1.00" fill="#9a9a9a"/>
<rect x="1847.00" y="442.00" width="4.00" height="1.00" fill="#9a9a9a"/>
<rect x="1847.00" y="434.00" width="4.00" height="1.00" fill="#9a9a9a"/>
<rect x="1847.00" y="425.00" width="4.00" height="1.00" fill="#9a9a9a"/>
<rect x="1847.00" y="417.00" width="4.00" height="1.00" fill="#9a9a9a"/>
<rect x="1837.00" y="408.00" width="14.00" height="1.00" fill="#9a9a9a"/>
<rect x="1847.00" y="399.00" width="4.00" height="1.00" fill="#9a9a9a"/>
<rect x="1847.00" y="391.00" width="4.00" height="1.00" fill="#9a9a9a"/>
<rect x="1847.00" y="382.00" width="4.00" height="1.00" fill="#9a9a9a"/>
<rect x="1847.00" y="374.00" width="4.00" height="1.00" fill="#9a9a9a"/>
<rect x="1844.00" y="365.00" width="7.00" height="1.00" fill="#9a9a9a"/>
<rect x="1847.00" y="356.00" width="4.00" height="1.00" fill="#9a9a9a"/>
<rect x="1847.00" y="348.00" width="4.00" height="1.00" fill="#9a9a9a"/>
<rect x="1847.00" y="339.00" width="4.00" height="1.00" fill="#9a9a9a"/>
<rect x="1847.00" y="331.00" width="4.00" height="1.00" fill="#9a9a9a"/>
<rect x="1837.00" y="322.00" width="14.00" height="1.00" fill="#9a9a9a"/>
<rect x="1847.00" y="313.00" width="4.00" height="1.00" fill="#9a9a9a"/>
<rect x="1847.00" y="305.00" width="4.00" height="1.00" fill="#9a9a9a"/>
<rect x="1847.00" y="296.00" width="4.00" height="1.00" fill="#9a9a9a"/>
<rect x="1847.00" y="288.00" width="4.00" height="1.00" fill="#9a9a9a"/>
<rect x="1844.00" y="279.00" width="7.00" height="1.00" fill="#9a9a9a"/>
<rect x="1847.00" y="270.00" width="4.00" height="1.00" fill="#9a9a9a"/>
<rect x="1847.00" y="262.00" width="4.00" height="1.00" fill="#9a9a9a"/>
<rect x="1847.00" y="253.00" width="4.00" height="1.00" fill="#9a9a9a"/>
<rect x="1847.00" y="245.00" width="4.00" height="1.00" fill="#9a9a9a"/>
<rect x="1837.00" y="236.00" width="14.00" height="1.00" fill="#9a9a9a"/>
<rect x="1847.00" y="227.00" width="4.00" height="1.00" fill="#9a9a9a"/>
<rect x="1847.00" y="219.00" width="4.00" height="1.00" fill="#9a9a9a"/>
<rect x="1847.00" y="210.00" width="4.00" height="1.00" fill="#9a9a9a"/>
<rect x="1847.00" y="202.00" width="4.00" height="1.00" fill="#9a9a9a"/>
<rect x="1844.00" y="193.00" width="7.00" height="1.00" fill="#9a9a9a"/>
<rect x="1847.00" y="184.00" width="4.00" height="1.00" fill="#9a9a9a"/>
<rect x="1847.00" y="176.00" width="4.00" height="1.00" fill="#9a9a9a"/>
<rect x="1847.00" y="167.00" width="4.00" height="1.00" fill="#9a9a9a"/>
</g>
<text x="1855.00" y="241.00" font-size="11" fill="#9a9ea6" textLength="37.42" lengthAdjust="spacingAndGlyphs">1.5700</text>
<text x="1855.00" y="327.00" font-size="11" fill="#9a9ea6" textLength="37.42" lengthAdjust="spacingAndGlyphs">1.5600</text>
<text x="1855.00" y="413.00" font-size="11" fill="#9a9ea6" textLength="37.42" lengthAdjust="spacingAndGlyphs">1.5500</text>
<text x="1855.00" y="499.00" font-size="11" fill="#9a9ea6" textLength="37.42" lengthAdjust="spacingAndGlyphs">1.5400</text>
<g clip-path="url(#cT)" shape-rendering="crispEdges">
<rect x="997.00" y="214.50" width="1.00" height="22.40" fill="#00a000"/>
<rect x="990.00" y="224.00" width="14.00" height="5.00" fill="#00a000"/>
<rect x="1020.00" y="221.30" width="1.00" height="42.50" fill="#a80000"/>
<rect x="1013.00" y="225.00" width="14.00" height="12.00" fill="#a80000"/>
<rect x="1043.00" y="231.80" width="1.00" height="43.90" fill="#a80000"/>
<rect x="1036.00" y="236.00" width="14.00" height="15.00" fill="#a80000"/>
<rect x="1066.00" y="249.90" width="1.00" height="20.80" fill="#a80000"/>
<rect x="1059.00" y="250.00" width="14.00" height="15.00" fill="#a80000"/>
<rect x="1089.00" y="268.90" width="1.00" height="34.70" fill="#a80000"/>
<rect x="1082.00" y="279.00" width="14.00" height="12.00" fill="#a80000"/>
<rect x="1112.00" y="289.90" width="1.00" height="28.80" fill="#a80000"/>
<rect x="1105.00" y="290.00" width="14.00" height="12.00" fill="#a80000"/>
<rect x="1135.00" y="295.80" width="1.00" height="32.90" fill="#a80000"/>
<rect x="1128.00" y="301.00" width="14.00" height="23.00" fill="#a80000"/>
<rect x="1158.00" y="304.30" width="1.00" height="21.70" fill="#00a000"/>
<rect x="1151.00" y="316.00" width="14.00" height="8.00" fill="#00a000"/>
<rect x="1181.00" y="316.20" width="1.00" height="64.70" fill="#a80000"/>
<rect x="1174.00" y="316.00" width="14.00" height="48.00" fill="#a80000"/>
<rect x="1204.00" y="359.80" width="1.00" height="11.90" fill="#a80000"/>
<rect x="1197.00" y="363.00" width="14.00" height="2.00" fill="#a80000"/>
<rect x="1227.00" y="364.10" width="1.00" height="13.70" fill="#a80000"/>
<rect x="1220.00" y="366.00" width="14.00" height="10.00" fill="#a80000"/>
<rect x="1250.00" y="368.00" width="1.00" height="12.10" fill="#00a000"/>
<rect x="1243.00" y="373.00" width="14.00" height="3.00" fill="#00a000"/>
<rect x="1273.00" y="360.00" width="1.00" height="57.80" fill="#00a000"/>
<rect x="1266.00" y="372.00" width="14.00" height="2.00" fill="#00a000"/>
<rect x="1296.00" y="350.90" width="1.00" height="42.90" fill="#a80000"/>
<rect x="1289.00" y="372.00" width="14.00" height="22.00" fill="#a80000"/>
<rect x="1319.00" y="362.70" width="1.00" height="40.00" fill="#00a000"/>
<rect x="1312.00" y="363.00" width="14.00" height="31.00" fill="#00a000"/>
<rect x="1342.00" y="355.90" width="1.00" height="20.10" fill="#a80000"/>
<rect x="1335.00" y="362.00" width="14.00" height="8.00" fill="#a80000"/>
<rect x="1365.00" y="353.60" width="1.00" height="21.70" fill="#00a000"/>
<rect x="1358.00" y="366.00" width="14.00" height="6.00" fill="#00a000"/>
<rect x="1388.00" y="326.90" width="1.00" height="45.00" fill="#00a000"/>
<rect x="1381.00" y="337.00" width="14.00" height="30.00" fill="#00a000"/>
<rect x="1411.00" y="307.90" width="1.00" height="61.20" fill="#a80000"/>
<rect x="1404.00" y="337.00" width="14.00" height="18.00" fill="#a80000"/>
<rect x="1434.00" y="345.80" width="1.00" height="47.30" fill="#a80000"/>
<rect x="1427.00" y="353.00" width="14.00" height="40.00" fill="#a80000"/>
<rect x="1457.00" y="377.80" width="1.00" height="32.90" fill="#a80000"/>
<rect x="1450.00" y="392.00" width="14.00" height="9.00" fill="#a80000"/>
<rect x="1480.00" y="397.10" width="1.00" height="40.70" fill="#a80000"/>
<rect x="1473.00" y="400.00" width="14.00" height="37.00" fill="#a80000"/>
<rect x="1503.00" y="412.70" width="1.00" height="27.90" fill="#00a000"/>
<rect x="1496.00" y="426.00" width="14.00" height="13.00" fill="#00a000"/>
<rect x="1526.00" y="407.00" width="1.00" height="33.60" fill="#a80000"/>
<rect x="1519.00" y="426.00" width="14.00" height="9.00" fill="#a80000"/>
<rect x="1549.00" y="386.90" width="1.00" height="51.80" fill="#00a000"/>
<rect x="1542.00" y="392.00" width="14.00" height="43.00" fill="#00a000"/>
<rect x="1572.00" y="386.90" width="1.00" height="24.60" fill="#a80000"/>
<rect x="1565.00" y="392.00" width="14.00" height="13.00" fill="#a80000"/>
<rect x="1595.00" y="394.90" width="1.00" height="26.90" fill="#a80000"/>
<rect x="1588.00" y="404.00" width="14.00" height="12.00" fill="#a80000"/>
<rect x="1618.00" y="415.00" width="1.00" height="27.90" fill="#a80000"/>
<rect x="1611.00" y="415.00" width="14.00" height="22.00" fill="#a80000"/>
<rect x="1641.00" y="421.10" width="1.00" height="21.80" fill="#00a000"/>
<rect x="1634.00" y="427.00" width="14.00" height="12.00" fill="#00a000"/>
<rect x="1664.00" y="424.10" width="1.00" height="16.50" fill="#00a000"/>
<rect x="1657.00" y="426.00" width="14.00" height="2.00" fill="#00a000"/>
<rect x="1687.00" y="420.00" width="1.00" height="40.70" fill="#a80000"/>
<rect x="1680.00" y="426.00" width="14.00" height="21.00" fill="#a80000"/>
<rect x="1710.00" y="439.00" width="1.00" height="50.70" fill="#a80000"/>
<rect x="1703.00" y="447.00" width="14.00" height="23.00" fill="#a80000"/>
<rect x="1733.00" y="461.10" width="1.00" height="27.50" fill="#00a000"/>
<rect x="1726.00" y="465.00" width="14.00" height="5.00" fill="#00a000"/>
<rect x="1756.00" y="441.30" width="1.00" height="29.00" fill="#a80000"/>
<rect x="1749.00" y="465.00" width="14.00" height="5.00" fill="#a80000"/>
<rect x="1778.00" y="441.30" width="1.00" height="15.30" fill="#00a000"/>
<rect x="1772.00" y="444.00" width="14.00" height="3.00" fill="#00a000"/>
</g>
<g clip-path="url(#cT)">
<polyline points="1129.9,170.1 1180.9,185.4 1231.4,200.0 1273.3,213.7 1319.0,226.3 1365.1,236.1 1410.9,244.6 1469.4,260.0 1526.1,276.0 1572.3,286.3 1618.5,296.6 1664.2,305.7 1710.2,318.3 1733.3,325.1 1756.1,329.7 1779.0,334.3" fill="none" stroke="#00ff00" stroke-width="1" shape-rendering="crispEdges"/>
<polyline points="995.7,183.6 1020.4,187.7 1043.3,193.0 1066.1,198.5 1089.4,204.9 1112.3,211.3 1135.1,221.3 1158.5,228.9 1180.9,238.0 1204.2,247.8 1222.0,255.5 1250.2,268.6 1273.3,277.7 1296.1,285.0 1319.0,290.3 1342.3,296.0 1365.1,301.0 1388.5,304.0 1410.9,307.4 1434.2,313.1 1457.6,320.0 1480.2,330.9 1503.3,337.7 1526.1,345.7 1549.0,348.0 1572.3,353.7 1595.1,357.8 1618.5,364.0 1640.9,369.3 1664.2,373.1 1687.6,379.5 1710.2,385.7 1733.3,392.6 1756.1,398.7 1779.0,401.3" fill="none" stroke="#ffff00" stroke-width="1" shape-rendering="crispEdges"/>
<polyline points="995.7,224.3 1020.4,227.3 1043.3,232.3 1066.1,239.1 1089.4,250.6 1112.3,260.9 1135.1,273.4 1158.5,284.9 1180.9,302.0 1204.2,314.6 1222.0,326.0 1250.2,340.6 1273.3,346.3 1296.1,356.6 1319.0,358.2 1342.3,361.1 1365.1,362.7 1388.5,356.6 1410.9,356.6 1434.2,364.1 1457.6,374.0 1480.2,385.7 1503.3,394.9 1526.1,403.5 1549.0,401.3 1572.3,402.2 1595.1,405.1 1618.5,412.7 1640.9,415.4 1664.2,418.2 1687.6,424.0 1710.2,434.9 1733.3,441.7 1756.1,447.4 1779.0,447.4" fill="none" stroke="#ff0000" stroke-width="1" shape-rendering="crispEdges"/>
</g>
<rect x="1089.00" y="157.00" width="1.00" height="12.00" fill="#9a9a9a"/>
<path d="M1084.9 157.2 L1094.1 157.2 L1090.1 165.3 L1088.9 165.3 Z" fill="#b8891a"/>
<rect x="1089.00" y="157.00" width="1.00" height="9.50" fill="#d0a020"/>
<rect x="1112.00" y="157.00" width="1.00" height="12.00" fill="#9a9a9a"/>
<path d="M1107.9 157.2 L1117.1 157.2 L1113.1 165.3 L1111.9 165.3 Z" fill="#b8891a"/>
<rect x="1112.00" y="157.00" width="1.00" height="9.50" fill="#d0a020"/>
<rect x="1250.00" y="157.00" width="1.00" height="12.00" fill="#9a9a9a"/>
<path d="M1245.9 157.2 L1255.1 157.2 L1251.1 165.3 L1249.9 165.3 Z" fill="#b8891a"/>
<rect x="1250.00" y="157.00" width="1.00" height="9.50" fill="#d0a020"/>
<rect x="1388.00" y="157.00" width="1.00" height="12.00" fill="#9a9a9a"/>
<path d="M1383.7 157.2 L1392.8 157.2 L1388.8 165.3 L1387.7 165.3 Z" fill="#b8891a"/>
<rect x="1388.00" y="157.00" width="1.00" height="9.50" fill="#d0a020"/>
<rect x="1526.00" y="157.00" width="1.00" height="12.00" fill="#9a9a9a"/>
<path d="M1521.7 157.2 L1530.8 157.2 L1526.8 165.3 L1525.7 165.3 Z" fill="#b8891a"/>
<rect x="1526.00" y="157.00" width="1.00" height="9.50" fill="#d0a020"/>
<rect x="1664.00" y="157.00" width="1.00" height="12.00" fill="#9a9a9a"/>
<path d="M1660.0 157.2 L1669.2 157.2 L1665.2 165.3 L1664.0 165.3 Z" fill="#b8891a"/>
<rect x="1664.00" y="157.00" width="1.00" height="9.50" fill="#d0a020"/>
<rect x="1779.00" y="157.00" width="1.00" height="12.00" fill="#9a9a9a"/>
<path d="M1774.8 157.2 L1784.0 157.2 L1780.0 165.3 L1778.8 165.3 Z" fill="#b8891a"/>
<rect x="1779.00" y="157.00" width="1.00" height="9.50" fill="#d0a020"/>
<rect x="1802.00" y="157.00" width="1.00" height="12.00" fill="#9a9a9a"/>
<path d="M1797.7 157.2 L1806.9 157.2 L1802.9 165.3 L1801.7 165.3 Z" fill="#b8891a"/>
<rect x="1802.00" y="157.00" width="1.00" height="9.50" fill="#d0a020"/>
<rect x="1851.50" y="435.70" width="48.50" height="15.50" fill="#4aa8f8"/>
<text x="1853.50" y="447.70" font-size="11" fill="#000000" textLength="44.14" lengthAdjust="spacingAndGlyphs">1.54580</text>
<rect x="996.00" y="1001.00" width="1.00" height="13.00" fill="#9a9a9a"/>
<rect x="1005.00" y="1011.00" width="1.00" height="3.00" fill="#9a9a9a"/>
<rect x="1019.00" y="1008.00" width="1.00" height="6.00" fill="#9a9a9a"/>
<rect x="1034.00" y="1011.00" width="1.00" height="3.00" fill="#9a9a9a"/>
<rect x="1048.00" y="1008.00" width="1.00" height="6.00" fill="#9a9a9a"/>
<rect x="1062.00" y="1011.00" width="1.00" height="3.00" fill="#9a9a9a"/>
<rect x="1077.00" y="1008.00" width="1.00" height="6.00" fill="#9a9a9a"/>
<rect x="1091.00" y="1011.00" width="1.00" height="3.00" fill="#9a9a9a"/>
<rect x="1106.00" y="1001.50" width="1.00" height="12.50" fill="#9a9a9a"/>
<rect x="1120.00" y="1011.00" width="1.00" height="3.00" fill="#9a9a9a"/>
<rect x="1134.00" y="1008.00" width="1.00" height="6.00" fill="#9a9a9a"/>
<rect x="1149.00" y="1011.00" width="1.00" height="3.00" fill="#9a9a9a"/>
<rect x="1163.00" y="1008.00" width="1.00" height="6.00" fill="#9a9a9a"/>
<rect x="1177.00" y="1011.00" width="1.00" height="3.00" fill="#9a9a9a"/>
<rect x="1192.00" y="1008.00" width="1.00" height="6.00" fill="#9a9a9a"/>
<rect x="1206.00" y="1011.00" width="1.00" height="3.00" fill="#9a9a9a"/>
<rect x="1220.00" y="1001.50" width="1.00" height="12.50" fill="#9a9a9a"/>
<rect x="1235.00" y="1011.00" width="1.00" height="3.00" fill="#9a9a9a"/>
<rect x="1249.00" y="1008.00" width="1.00" height="6.00" fill="#9a9a9a"/>
<rect x="1264.00" y="1011.00" width="1.00" height="3.00" fill="#9a9a9a"/>
<rect x="1278.00" y="1008.00" width="1.00" height="6.00" fill="#9a9a9a"/>
<rect x="1292.00" y="1011.00" width="1.00" height="3.00" fill="#9a9a9a"/>
<rect x="1307.00" y="1008.00" width="1.00" height="6.00" fill="#9a9a9a"/>
<rect x="1321.00" y="1011.00" width="1.00" height="3.00" fill="#9a9a9a"/>
<rect x="1336.00" y="1001.50" width="1.00" height="12.50" fill="#9a9a9a"/>
<rect x="1350.00" y="1011.00" width="1.00" height="3.00" fill="#9a9a9a"/>
<rect x="1364.00" y="1008.00" width="1.00" height="6.00" fill="#9a9a9a"/>
<rect x="1379.00" y="1011.00" width="1.00" height="3.00" fill="#9a9a9a"/>
<rect x="1393.00" y="1008.00" width="1.00" height="6.00" fill="#9a9a9a"/>
<rect x="1407.00" y="1011.00" width="1.00" height="3.00" fill="#9a9a9a"/>
<rect x="1422.00" y="1008.00" width="1.00" height="6.00" fill="#9a9a9a"/>
<rect x="1436.00" y="1011.00" width="1.00" height="3.00" fill="#9a9a9a"/>
<rect x="1450.00" y="1001.50" width="1.00" height="12.50" fill="#9a9a9a"/>
<rect x="1465.00" y="1011.00" width="1.00" height="3.00" fill="#9a9a9a"/>
<rect x="1479.00" y="1008.00" width="1.00" height="6.00" fill="#9a9a9a"/>
<rect x="1494.00" y="1011.00" width="1.00" height="3.00" fill="#9a9a9a"/>
<rect x="1508.00" y="1008.00" width="1.00" height="6.00" fill="#9a9a9a"/>
<rect x="1522.00" y="1011.00" width="1.00" height="3.00" fill="#9a9a9a"/>
<rect x="1537.00" y="1008.00" width="1.00" height="6.00" fill="#9a9a9a"/>
<rect x="1551.00" y="1011.00" width="1.00" height="3.00" fill="#9a9a9a"/>
<rect x="1566.00" y="1001.50" width="1.00" height="12.50" fill="#9a9a9a"/>
<rect x="1580.00" y="1011.00" width="1.00" height="3.00" fill="#9a9a9a"/>
<rect x="1594.00" y="1008.00" width="1.00" height="6.00" fill="#9a9a9a"/>
<rect x="1609.00" y="1011.00" width="1.00" height="3.00" fill="#9a9a9a"/>
<rect x="1623.00" y="1008.00" width="1.00" height="6.00" fill="#9a9a9a"/>
<rect x="1637.00" y="1011.00" width="1.00" height="3.00" fill="#9a9a9a"/>
<rect x="1652.00" y="1008.00" width="1.00" height="6.00" fill="#9a9a9a"/>
<rect x="1666.00" y="1011.00" width="1.00" height="3.00" fill="#9a9a9a"/>
<rect x="1680.00" y="1001.50" width="1.00" height="12.50" fill="#9a9a9a"/>
<rect x="1695.00" y="1011.00" width="1.00" height="3.00" fill="#9a9a9a"/>
<rect x="1709.00" y="1008.00" width="1.00" height="6.00" fill="#9a9a9a"/>
<rect x="1724.00" y="1011.00" width="1.00" height="3.00" fill="#9a9a9a"/>
<rect x="1738.00" y="1008.00" width="1.00" height="6.00" fill="#9a9a9a"/>
<rect x="1752.00" y="1011.00" width="1.00" height="3.00" fill="#9a9a9a"/>
<rect x="1767.00" y="1008.00" width="1.00" height="6.00" fill="#9a9a9a"/>
<rect x="1781.00" y="1011.00" width="1.00" height="3.00" fill="#9a9a9a"/>
<rect x="1796.00" y="1001.50" width="1.00" height="12.50" fill="#9a9a9a"/>
<rect x="1810.00" y="1011.00" width="1.00" height="3.00" fill="#9a9a9a"/>
<rect x="1824.00" y="1008.00" width="1.00" height="6.00" fill="#9a9a9a"/>
<rect x="1839.00" y="1011.00" width="1.00" height="3.00" fill="#9a9a9a"/>
<text x="996.70" y="1031.80" font-size="11" fill="#9a9ea6" textLength="101.60" lengthAdjust="spacingAndGlyphs">21/05/2018 17:00</text>
<text x="1203.01" y="1031.80" font-size="11" fill="#9a9ea6" textLength="32.98" lengthAdjust="spacingAndGlyphs">21:00</text>
<text x="1299.59" y="1031.80" font-size="11" fill="#9a9ea6" textLength="69.83" lengthAdjust="spacingAndGlyphs">23/05 11:00</text>
<text x="1414.59" y="1031.80" font-size="11" fill="#9a9ea6" textLength="69.83" lengthAdjust="spacingAndGlyphs">24/05 01:00</text>
<text x="1548.01" y="1031.80" font-size="11" fill="#9a9ea6" textLength="32.98" lengthAdjust="spacingAndGlyphs">15:00</text>
<text x="1644.59" y="1031.80" font-size="11" fill="#9a9ea6" textLength="69.83" lengthAdjust="spacingAndGlyphs">25/05 05:00</text>
<text x="1759.09" y="1031.80" font-size="11" fill="#9a9ea6" textLength="69.83" lengthAdjust="spacingAndGlyphs">27/05 19:00</text>
<text x="1022.26" y="646.70" font-size="11" fill="#9a9ea6" textLength="32.98" lengthAdjust="spacingAndGlyphs">22/05</text>
<text x="1219.76" y="646.70" font-size="11" fill="#9a9ea6" textLength="32.98" lengthAdjust="spacingAndGlyphs">23/05</text>
<text x="1416.76" y="646.70" font-size="11" fill="#9a9ea6" textLength="32.98" lengthAdjust="spacingAndGlyphs">24/05</text>
<text x="1613.91" y="646.70" font-size="11" fill="#9a9ea6" textLength="32.98" lengthAdjust="spacingAndGlyphs">25/05</text>
<text x="1761.81" y="646.70" font-size="11" fill="#9a9ea6" textLength="32.98" lengthAdjust="spacingAndGlyphs">27/05</text>
<text x="1810.81" y="646.70" font-size="11" fill="#9a9ea6" textLength="32.98" lengthAdjust="spacingAndGlyphs">28/05</text>
<rect x="996.00" y="653.00" width="1.00" height="14.00" fill="#9a9a9a"/>
<rect x="1014.00" y="653.00" width="1.00" height="3.00" fill="#9a9a9a"/>
<rect x="1064.00" y="653.00" width="1.00" height="3.00" fill="#9a9a9a"/>
<rect x="1089.00" y="653.00" width="1.00" height="6.00" fill="#9a9a9a"/>
<rect x="1114.00" y="653.00" width="1.00" height="3.00" fill="#9a9a9a"/>
<rect x="1139.00" y="653.00" width="1.00" height="6.00" fill="#9a9a9a"/>
<rect x="1162.00" y="653.00" width="1.00" height="3.00" fill="#9a9a9a"/>
<rect x="1188.00" y="653.00" width="1.00" height="6.00" fill="#9a9a9a"/>
<rect x="1212.00" y="653.00" width="1.00" height="3.00" fill="#9a9a9a"/>
<rect x="1261.00" y="653.00" width="1.00" height="3.00" fill="#9a9a9a"/>
<rect x="1286.00" y="653.00" width="1.00" height="6.00" fill="#9a9a9a"/>
<rect x="1310.00" y="653.00" width="1.00" height="3.00" fill="#9a9a9a"/>
<rect x="1336.00" y="653.00" width="1.00" height="6.00" fill="#9a9a9a"/>
<rect x="1360.00" y="653.00" width="1.00" height="3.00" fill="#9a9a9a"/>
<rect x="1384.00" y="653.00" width="1.00" height="6.00" fill="#9a9a9a"/>
<rect x="1410.00" y="653.00" width="1.00" height="3.00" fill="#9a9a9a"/>
<rect x="1459.00" y="653.00" width="1.00" height="3.00" fill="#9a9a9a"/>
<rect x="1483.00" y="653.00" width="1.00" height="6.00" fill="#9a9a9a"/>
<rect x="1508.00" y="653.00" width="1.00" height="3.00" fill="#9a9a9a"/>
<rect x="1532.00" y="653.00" width="1.00" height="6.00" fill="#9a9a9a"/>
<rect x="1558.00" y="653.00" width="1.00" height="3.00" fill="#9a9a9a"/>
<rect x="1582.00" y="653.00" width="1.00" height="6.00" fill="#9a9a9a"/>
<rect x="1606.00" y="653.00" width="1.00" height="3.00" fill="#9a9a9a"/>
<rect x="1649.00" y="653.00" width="1.00" height="3.00" fill="#9a9a9a"/>
<rect x="1668.00" y="653.00" width="1.00" height="6.00" fill="#9a9a9a"/>
<rect x="1687.00" y="653.00" width="1.00" height="3.00" fill="#9a9a9a"/>
<rect x="1705.00" y="653.00" width="1.00" height="6.00" fill="#9a9a9a"/>
<rect x="1724.00" y="653.00" width="1.00" height="3.00" fill="#9a9a9a"/>
<rect x="1742.00" y="653.00" width="1.00" height="6.00" fill="#9a9a9a"/>
<rect x="1761.00" y="653.00" width="1.00" height="3.00" fill="#9a9a9a"/>
<rect x="1785.00" y="653.00" width="1.00" height="3.00" fill="#9a9a9a"/>
<rect x="1792.00" y="653.00" width="1.00" height="3.00" fill="#9a9a9a"/>
<rect x="1798.00" y="653.00" width="1.00" height="3.00" fill="#9a9a9a"/>
<rect x="1803.00" y="653.00" width="1.00" height="3.00" fill="#9a9a9a"/>
<rect x="1810.00" y="653.00" width="1.00" height="3.00" fill="#9a9a9a"/>
<rect x="1815.00" y="653.00" width="1.00" height="3.00" fill="#9a9a9a"/>
<rect x="1822.00" y="653.00" width="1.00" height="3.00" fill="#9a9a9a"/>
<g shape-rendering="crispEdges">
<rect x="1851.00" y="653.00" width="1.00" height="361.00" fill="#9a9a9a"/>
<rect x="1847.00" y="1005.00" width="4.00" height="1.00" fill="#9a9a9a"/>
<rect x="1837.00" y="992.00" width="14.00" height="1.00" fill="#9a9a9a"/>
<rect x="1847.00" y="979.00" width="4.00" height="1.00" fill="#9a9a9a"/>
<rect x="1847.00" y="966.00" width="4.00" height="1.00" fill="#9a9a9a"/>
<rect x="1847.00" y="953.00" width="4.00" height="1.00" fill="#9a9a9a"/>
<rect x="1847.00" y="940.00" width="4.00" height="1.00" fill="#9a9a9a"/>
<rect x="1844.00" y="927.00" width="7.00" height="1.00" fill="#9a9a9a"/>
<rect x="1847.00" y="914.00" width="4.00" height="1.00" fill="#9a9a9a"/>
<rect x="1847.00" y="901.00" width="4.00" height="1.00" fill="#9a9a9a"/>
<rect x="1847.00" y="888.00" width="4.00" height="1.00" fill="#9a9a9a"/>
<rect x="1847.00" y="875.00" width="4.00" height="1.00" fill="#9a9a9a"/>
<rect x="1837.00" y="863.00" width="14.00" height="1.00" fill="#9a9a9a"/>
<rect x="1847.00" y="850.00" width="4.00" height="1.00" fill="#9a9a9a"/>
<rect x="1847.00" y="837.00" width="4.00" height="1.00" fill="#9a9a9a"/>
<rect x="1847.00" y="824.00" width="4.00" height="1.00" fill="#9a9a9a"/>
<rect x="1847.00" y="811.00" width="4.00" height="1.00" fill="#9a9a9a"/>
<rect x="1844.00" y="798.00" width="7.00" height="1.00" fill="#9a9a9a"/>
<rect x="1847.00" y="785.00" width="4.00" height="1.00" fill="#9a9a9a"/>
<rect x="1847.00" y="772.00" width="4.00" height="1.00" fill="#9a9a9a"/>
<rect x="1847.00" y="759.00" width="4.00" height="1.00" fill="#9a9a9a"/>
<rect x="1847.00" y="746.00" width="4.00" height="1.00" fill="#9a9a9a"/>
<rect x="1837.00" y="733.00" width="14.00" height="1.00" fill="#9a9a9a"/>
<rect x="1847.00" y="720.00" width="4.00" height="1.00" fill="#9a9a9a"/>
<rect x="1847.00" y="707.00" width="4.00" height="1.00" fill="#9a9a9a"/>
<rect x="1847.00" y="694.00" width="4.00" height="1.00" fill="#9a9a9a"/>
<rect x="1847.00" y="681.00" width="4.00" height="1.00" fill="#9a9a9a"/>
<rect x="1844.00" y="668.00" width="7.00" height="1.00" fill="#9a9a9a"/>
</g>
<text x="1855.00" y="738.00" font-size="11" fill="#9a9ea6" textLength="37.42" lengthAdjust="spacingAndGlyphs">1.5600</text>
<text x="1855.00" y="868.00" font-size="11" fill="#9a9ea6" textLength="37.42" lengthAdjust="spacingAndGlyphs">1.5500</text>
<text x="1855.00" y="997.00" font-size="11" fill="#9a9ea6" textLength="37.42" lengthAdjust="spacingAndGlyphs">1.5400</text>
<g clip-path="url(#cB)" shape-rendering="crispEdges">
<rect x="1007.00" y="795.00" width="1.00" height="22.80" fill="#a80000"/>
<rect x="1002.00" y="805.00" width="11.00" height="8.00" fill="#a80000"/>
<rect x="1023.00" y="805.00" width="1.00" height="14.90" fill="#00a000"/>
<rect x="1018.00" y="807.00" width="11.00" height="6.00" fill="#00a000"/>
<rect x="1039.00" y="801.10" width="1.00" height="9.60" fill="#a80000"/>
<rect x="1034.00" y="807.00" width="11.00" height="4.00" fill="#a80000"/>
<rect x="1056.00" y="809.10" width="1.00" height="63.60" fill="#a80000"/>
<rect x="1051.00" y="810.00" width="11.00" height="57.00" fill="#a80000"/>
<rect x="1072.00" y="789.00" width="1.00" height="88.70" fill="#00a000"/>
<rect x="1067.00" y="808.00" width="11.00" height="59.00" fill="#00a000"/>
<rect x="1089.00" y="776.00" width="1.00" height="35.90" fill="#00a000"/>
<rect x="1084.00" y="794.00" width="11.00" height="14.00" fill="#00a000"/>
<rect x="1105.00" y="790.90" width="1.00" height="49.80" fill="#a80000"/>
<rect x="1100.00" y="794.00" width="11.00" height="47.00" fill="#a80000"/>
<rect x="1122.00" y="830.90" width="1.00" height="24.00" fill="#00a000"/>
<rect x="1117.00" y="839.00" width="11.00" height="2.00" fill="#00a000"/>
<rect x="1138.00" y="793.80" width="1.00" height="51.90" fill="#00a000"/>
<rect x="1133.00" y="794.00" width="11.00" height="45.00" fill="#00a000"/>
<rect x="1154.00" y="782.90" width="1.00" height="32.00" fill="#a80000"/>
<rect x="1149.00" y="794.00" width="11.00" height="13.00" fill="#a80000"/>
<rect x="1171.00" y="793.80" width="1.00" height="15.30" fill="#00a000"/>
<rect x="1166.00" y="804.00" width="11.00" height="3.00" fill="#00a000"/>
<rect x="1187.00" y="801.10" width="1.00" height="10.80" fill="#00a000"/>
<rect x="1182.00" y="804.00" width="11.00" height="4.00" fill="#00a000"/>
<rect x="1204.00" y="781.00" width="1.00" height="27.00" fill="#00a000"/>
<rect x="1199.00" y="799.00" width="11.00" height="6.00" fill="#00a000"/>
<rect x="1220.00" y="756.10" width="1.00" height="51.90" fill="#00a000"/>
<rect x="1215.00" y="763.00" width="11.00" height="37.00" fill="#00a000"/>
<rect x="1237.00" y="739.90" width="1.00" height="24.00" fill="#00a000"/>
<rect x="1232.00" y="756.00" width="11.00" height="8.00" fill="#00a000"/>
<rect x="1253.00" y="709.30" width="1.00" height="47.70" fill="#00a000"/>
<rect x="1248.00" y="711.00" width="11.00" height="46.00" fill="#00a000"/>
<rect x="1270.00" y="710.90" width="1.00" height="92.10" fill="#a80000"/>
<rect x="1265.00" y="711.00" width="11.00" height="70.00" fill="#a80000"/>
<rect x="1286.00" y="768.00" width="1.00" height="51.90" fill="#a80000"/>
<rect x="1281.00" y="780.00" width="11.00" height="39.00" fill="#a80000"/>
<rect x="1302.00" y="795.40" width="1.00" height="43.50" fill="#a80000"/>
<rect x="1297.00" y="818.00" width="11.00" height="21.00" fill="#a80000"/>
<rect x="1319.00" y="816.00" width="1.00" height="51.00" fill="#a80000"/>
<rect x="1314.00" y="838.00" width="11.00" height="24.00" fill="#a80000"/>
<rect x="1335.00" y="832.00" width="1.00" height="35.00" fill="#00a000"/>
<rect x="1330.00" y="850.00" width="11.00" height="11.00" fill="#00a000"/>
<rect x="1352.00" y="846.20" width="1.00" height="55.50" fill="#a80000"/>
<rect x="1347.00" y="850.00" width="11.00" height="52.00" fill="#a80000"/>
<rect x="1368.00" y="889.80" width="1.00" height="18.30" fill="#a80000"/>
<rect x="1363.00" y="901.00" width="11.00" height="4.00" fill="#a80000"/>
<rect x="1385.00" y="892.10" width="1.00" height="18.80" fill="#00a000"/>
<rect x="1380.00" y="901.00" width="11.00" height="8.00" fill="#00a000"/>
<rect x="1401.00" y="869.30" width="1.00" height="43.80" fill="#00a000"/>
<rect x="1396.00" y="889.00" width="11.00" height="13.00" fill="#00a000"/>
<rect x="1417.00" y="861.00" width="1.00" height="52.10" fill="#a80000"/>
<rect x="1412.00" y="889.00" width="11.00" height="13.00" fill="#a80000"/>
<rect x="1434.00" y="892.10" width="1.00" height="16.90" fill="#a80000"/>
<rect x="1429.00" y="900.00" width="11.00" height="2.00" fill="#a80000"/>
<rect x="1450.00" y="867.00" width="1.00" height="41.60" fill="#00a000"/>
<rect x="1445.00" y="874.00" width="11.00" height="28.00" fill="#00a000"/>
<rect x="1467.00" y="830.20" width="1.00" height="44.50" fill="#00a000"/>
<rect x="1462.00" y="839.00" width="11.00" height="36.00" fill="#00a000"/>
<rect x="1483.00" y="830.20" width="1.00" height="33.30" fill="#a80000"/>
<rect x="1478.00" y="839.00" width="11.00" height="25.00" fill="#a80000"/>
<rect x="1500.00" y="836.10" width="1.00" height="32.50" fill="#00a000"/>
<rect x="1495.00" y="856.00" width="11.00" height="8.00" fill="#00a000"/>
<rect x="1516.00" y="841.80" width="1.00" height="42.10" fill="#a80000"/>
<rect x="1511.00" y="856.00" width="11.00" height="9.00" fill="#a80000"/>
<rect x="1532.00" y="849.10" width="1.00" height="30.90" fill="#a80000"/>
<rect x="1527.00" y="864.00" width="11.00" height="11.00" fill="#a80000"/>
<rect x="1549.00" y="872.50" width="1.00" height="25.30" fill="#a80000"/>
<rect x="1544.00" y="874.00" width="11.00" height="23.00" fill="#a80000"/>
<rect x="1565.00" y="895.30" width="1.00" height="19.70" fill="#a80000"/>
<rect x="1560.00" y="896.00" width="11.00" height="10.00" fill="#a80000"/>
<rect x="1582.00" y="901.00" width="1.00" height="14.00" fill="#a80000"/>
<rect x="1577.00" y="908.00" width="11.00" height="5.00" fill="#a80000"/>
<rect x="1598.00" y="882.30" width="1.00" height="29.20" fill="#00a000"/>
<rect x="1593.00" y="891.00" width="11.00" height="21.00" fill="#00a000"/>
<rect x="1615.00" y="886.20" width="1.00" height="25.80" fill="#a80000"/>
<rect x="1610.00" y="890.00" width="11.00" height="10.00" fill="#a80000"/>
<rect x="1631.00" y="886.90" width="1.00" height="17.10" fill="#00a000"/>
<rect x="1626.00" y="890.00" width="11.00" height="10.00" fill="#00a000"/>
<rect x="1647.00" y="878.90" width="1.00" height="24.40" fill="#a80000"/>
<rect x="1642.00" y="890.00" width="11.00" height="6.00" fill="#a80000"/>
<rect x="1664.00" y="894.90" width="1.00" height="48.00" fill="#a80000"/>
<rect x="1659.00" y="895.00" width="11.00" height="28.00" fill="#a80000"/>
<rect x="1680.00" y="909.00" width="1.00" height="46.90" fill="#a80000"/>
<rect x="1675.00" y="922.00" width="11.00" height="11.00" fill="#a80000"/>
<rect x="1697.00" y="929.10" width="1.00" height="56.50" fill="#a80000"/>
<rect x="1692.00" y="932.00" width="11.00" height="23.00" fill="#a80000"/>
<rect x="1713.00" y="948.10" width="1.00" height="36.60" fill="#00a000"/>
<rect x="1708.00" y="952.00" width="11.00" height="3.00" fill="#00a000"/>
<rect x="1730.00" y="942.90" width="1.00" height="21.70" fill="#00a000"/>
<rect x="1725.00" y="948.00" width="11.00" height="5.00" fill="#00a000"/>
<rect x="1746.00" y="912.00" width="1.00" height="36.60" fill="#00a000"/>
<rect x="1741.00" y="914.00" width="11.00" height="35.00" fill="#00a000"/>
<rect x="1762.00" y="912.00" width="1.00" height="45.70" fill="#a80000"/>
<rect x="1757.00" y="914.00" width="11.00" height="43.00" fill="#a80000"/>
<rect x="1779.00" y="912.00" width="1.00" height="24.00" fill="#00a000"/>
<rect x="1774.00" y="917.00" width="11.00" height="5.00" fill="#00a000"/>
</g>
<g clip-path="url(#cB)">
<polyline points="1074.1,666.3 1089.4,669.7 1105.4,676.6 1122.1,683.0 1138.6,686.9 1155.0,691.4 1171.3,696.0 1187.7,701.3 1204.4,704.5 1230.0,708.1 1253.6,709.7 1269.8,712.0 1286.3,716.6 1302.7,721.1 1319.4,725.3 1335.4,731.4 1352.1,737.1 1368.6,742.9 1385.0,749.0 1401.3,755.0 1417.7,760.5 1434.4,766.4 1460.0,773.3 1483.6,778.3 1516.3,785.1 1549.4,793.1 1582.1,800.0 1615.0,808.0 1647.7,814.9 1680.4,822.9 1697.1,828.6 1713.6,833.8 1729.8,837.7 1746.3,841.1 1762.7,845.7 1779.4,848.5" fill="none" stroke="#00ff00" stroke-width="1" shape-rendering="crispEdges"/>
<polyline points="995.7,702.9 1012.9,710.4 1039.1,723.4 1056.3,733.7 1072.7,739.9 1089.4,744.7 1105.4,752.0 1122.1,758.4 1138.6,761.1 1155.0,764.6 1171.3,766.9 1187.7,769.8 1200.3,772.1 1220.0,771.9 1237.1,770.3 1253.6,766.4 1269.8,767.5 1286.3,772.1 1302.7,777.1 1319.4,784.0 1335.4,788.6 1352.1,797.0 1368.6,806.9 1385.0,813.0 1401.3,817.1 1417.7,822.9 1434.4,829.7 1450.4,834.3 1467.1,834.3 1483.6,836.6 1499.8,838.9 1516.3,840.5 1532.7,842.7 1549.4,848.0 1565.4,851.4 1582.1,856.5 1598.6,858.3 1615.0,862.9 1631.3,864.7 1647.7,867.0 1664.4,870.9 1680.4,875.0 1697.1,881.1 1713.6,886.9 1729.8,891.4 1746.3,893.7 1762.7,898.3 1779.4,900.6" fill="none" stroke="#ffff00" stroke-width="1" shape-rendering="crispEdges"/>
<polyline points="995.7,776.5 1010.6,783.5 1039.1,792.0 1056.3,809.6 1072.7,809.1 1089.4,805.0 1105.4,811.9 1122.1,819.4 1138.6,813.0 1155.0,811.9 1171.3,810.3 1187.7,809.1 1204.4,806.9 1220.4,798.9 1237.1,789.3 1253.6,771.4 1269.8,773.7 1286.3,784.0 1302.7,795.4 1319.4,811.4 1335.4,819.0 1352.1,837.3 1368.6,853.0 1385.0,862.9 1401.3,868.6 1417.7,876.1 1434.4,881.1 1450.4,880.0 1467.1,871.5 1483.6,869.3 1499.8,866.3 1516.3,866.3 1532.7,866.3 1549.4,875.4 1565.4,882.3 1582.1,888.5 1598.6,888.5 1615.0,890.7 1631.3,891.4 1647.7,892.1 1664.4,897.1 1680.4,905.1 1697.1,916.6 1713.6,923.4 1729.8,930.3 1746.3,926.2 1762.7,933.0 1779.4,929.1" fill="none" stroke="#ff0000" stroke-width="1" shape-rendering="crispEdges"/>
</g>
<rect x="1039.00" y="653.00" width="1.00" height="12.00" fill="#9a9a9a"/>
<path d="M1034.9 653.2 L1044.1 653.2 L1040.1 661.3 L1038.9 661.3 Z" fill="#b8891a"/>
<rect x="1039.00" y="653.00" width="1.00" height="9.50" fill="#d0a020"/>
<rect x="1237.00" y="653.00" width="1.00" height="12.00" fill="#9a9a9a"/>
<path d="M1232.4 653.2 L1241.6 653.2 L1237.6 661.3 L1236.4 661.3 Z" fill="#b8891a"/>
<rect x="1237.00" y="653.00" width="1.00" height="9.50" fill="#d0a020"/>
<rect x="1433.00" y="653.00" width="1.00" height="12.00" fill="#9a9a9a"/>
<path d="M1429.2 653.2 L1438.3 653.2 L1434.3 661.3 L1433.2 661.3 Z" fill="#b8891a"/>
<rect x="1433.00" y="653.00" width="1.00" height="9.50" fill="#d0a020"/>
<rect x="1631.00" y="653.00" width="1.00" height="12.00" fill="#9a9a9a"/>
<path d="M1626.7 653.2 L1635.8 653.2 L1631.8 661.3 L1630.7 661.3 Z" fill="#b8891a"/>
<rect x="1631.00" y="653.00" width="1.00" height="9.50" fill="#d0a020"/>
<rect x="1779.00" y="653.00" width="1.00" height="12.00" fill="#9a9a9a"/>
<path d="M1774.6 653.2 L1783.8 653.2 L1779.8 661.3 L1778.6 661.3 Z" fill="#b8891a"/>
<rect x="1779.00" y="653.00" width="1.00" height="9.50" fill="#d0a020"/>
<rect x="1828.00" y="653.00" width="1.00" height="12.00" fill="#9a9a9a"/>
<path d="M1823.7 653.2 L1832.9 653.2 L1828.9 661.3 L1827.7 661.3 Z" fill="#b8891a"/>
<rect x="1828.00" y="653.00" width="1.00" height="9.50" fill="#d0a020"/>
<rect x="1851.50" y="909.00" width="48.50" height="15.50" fill="#4aa8f8"/>
<text x="1853.50" y="921.00" font-size="11" fill="#000000" textLength="44.14" lengthAdjust="spacingAndGlyphs">1.54580</text>
<rect x="984.20" y="59.00" width="2.90" height="989.00" fill="#1a1b1e"/>
<rect x="986.70" y="551.70" width="931.00" height="3.30" fill="#1a1b1e"/>
</svg></body></html>
